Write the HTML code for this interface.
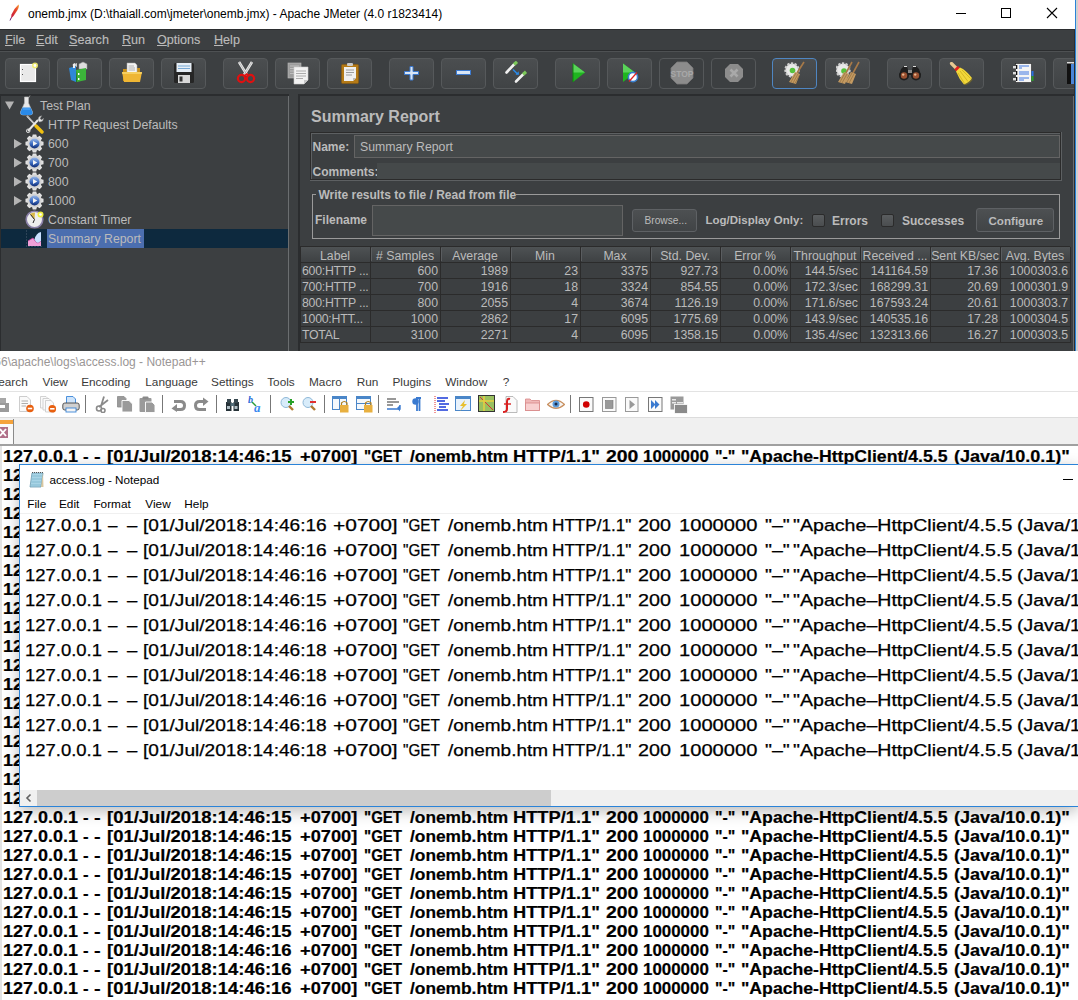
<!DOCTYPE html><html><head><meta charset="utf-8"><style>
*{margin:0;padding:0;box-sizing:border-box}
html,body{width:1078px;height:1000px;overflow:hidden;background:#fff;font-family:"Liberation Sans",sans-serif}
.a{position:absolute}
.t{position:absolute;white-space:pre;line-height:1}
#jm{position:absolute;left:0;top:0;width:1078px;height:351px;background:#3c3f41;overflow:hidden}
.btn{position:absolute;top:58px;width:45px;height:31px;border:1px solid #56595b;border-radius:4px;background:linear-gradient(#4b4e50,#404345)}
.btn svg{position:absolute;left:12px;top:6px}
.mi{position:absolute;top:34px;font-size:12.6px;color:#bbbbbb;line-height:1;white-space:pre;-webkit-text-stroke:0.15px #bbb}
.mi u{text-decoration:underline;text-underline-offset:1px}
.tr{position:absolute;font-size:12.5px;color:#bbbbbb;line-height:1;white-space:pre}
.lb{position:absolute;font-weight:bold;font-size:12px;color:#bbbbbb;line-height:1;white-space:pre}
.fld{position:absolute;background:#45494a;border:1px solid #646464}
.cell{position:absolute;font-size:12.3px;color:#bbbbbb;line-height:1;white-space:pre}
.nl{position:absolute;left:4px;font-weight:bold;font-size:15px;letter-spacing:1.44px;color:#000;line-height:1;white-space:pre}
.np{position:absolute;left:25px;font-size:16px;color:#000;line-height:1;white-space:pre}
.nm{position:absolute;font-size:12px;color:#000;line-height:1;white-space:pre}
.bw{position:absolute;font-style:normal;white-space:pre;line-height:1;font-size:16px;font-weight:bold;color:#000;transform-origin:0 0;-webkit-text-stroke:0.2px #000}
.nw{position:absolute;font-style:normal;white-space:pre;line-height:1;font-size:15.6px;color:#000;transform-origin:0 0;-webkit-text-stroke:0.25px #000}
</style></head><body>
<div id="jm">
<div class="a" style="left:0px;top:0px;width:1078px;height:29px;background:#fff;"></div>
<svg class="a" style="left:9px;top:4px" width="11" height="17" viewBox="0 0 11 17"><defs><linearGradient id="fg" x1="1" y1="0" x2="0" y2="1"><stop offset="0" stop-color="#f7a030"/><stop offset="0.35" stop-color="#e84a2a"/><stop offset="1" stop-color="#c01040"/></linearGradient></defs><path d="M9.5 0.5 Q10.5 2.5 8.5 6 L4.5 12 L2 14.5 L2.5 10.5 Q5 4.5 9.5 0.5 Z" fill="url(#fg)"/><path d="M2.3 13.5 L1 16.5" stroke="#6a2a7a" stroke-width="1"/></svg>
<div class="t" style="left:28px;top:7.64px;font-size:12px;color:#000;font-weight:normal;">onemb.jmx (D:\thaiall.com\jmeter\onemb.jmx) - Apache JMeter (4.0 r1823414)</div>
<div class="a" style="left:956px;top:13px;width:10px;height:1px;background:#000;"></div>
<div class="a" style="left:1001px;top:8px;width:10px;height:10px;border:1px solid #000"></div>
<svg class="a" style="left:1046px;top:7px" width="12" height="12" viewBox="0 0 12 12"><path d="M1 1 L11 11 M11 1 L1 11" stroke="#000" stroke-width="1.1"/></svg>
<div class="a" style="left:0px;top:29px;width:1078px;height:1px;background:#2b2d2f;"></div>
<div class="a" style="left:0px;top:50px;width:1078px;height:1px;background:#2b2d2f;"></div>
<div class="a" style="left:0px;top:51px;width:1078px;height:1px;background:#4e5153;"></div>
<div class="mi" style="left:5px"><u>F</u>ile</div>
<div class="mi" style="left:36px"><u>E</u>dit</div>
<div class="mi" style="left:69px"><u>S</u>earch</div>
<div class="mi" style="left:122px"><u>R</u>un</div>
<div class="mi" style="left:157px"><u>O</u>ptions</div>
<div class="mi" style="left:214px"><u>H</u>elp</div>
<div class="btn" style="left:5px"></div>
<div class="btn" style="left:57px"></div>
<div class="btn" style="left:109px"></div>
<div class="btn" style="left:161px"></div>
<div class="btn" style="left:223px"></div>
<div class="btn" style="left:275px"></div>
<div class="btn" style="left:327px"></div>
<div class="btn" style="left:389px"></div>
<div class="btn" style="left:441px"></div>
<div class="btn" style="left:493px"></div>
<div class="btn" style="left:555px"></div>
<div class="btn" style="left:607px"></div>
<div class="btn" style="left:825px"></div>
<div class="btn" style="left:887px"></div>
<div class="btn" style="left:939px"></div>
<div class="btn" style="left:1001px"></div>
<div class="btn" style="left:1053px"></div>
<div class="btn" style="left:659px;background:#3c3f41;border-color:#55585a"></div>
<div class="btn" style="left:711px;background:#3c3f41;border-color:#55585a"></div>
<div class="btn" style="left:772px;border-color:#4f86c2"></div>
<svg class="a" style="left:19px;top:62px" width="20" height="22" viewBox="0 0 20 22"><rect x="1.5" y="2.5" width="15" height="17" fill="#e9e9e9" stroke="#fff" stroke-width="1.2"/><circle cx="16" cy="3.5" r="3" fill="#f3ee6a" opacity="0.9"/><circle cx="16" cy="3.5" r="1.4" fill="#fff"/><rect x="3" y="7" width="1" height="1" fill="#555"/><rect x="3" y="12" width="1" height="1" fill="#555"/></svg>
<svg class="a" style="left:68px;top:61px" width="22" height="23" viewBox="0 0 22 23"><path d="M4 4 L9 2 L9 6 Z" fill="#ccc"/><path d="M11 3 L15 1 L19 3 V8 L11 8 Z" fill="#ddd" stroke="#999" stroke-width="0.5"/><path d="M1 7 L8 5 V21 L3 19 Z" fill="#2f88d8"/><path d="M8 9 L18 7 V19 L9 21 Z" fill="#3cb53a"/><path d="M8 9 L9 21 L8 21 Z" fill="#1f7d20"/><rect x="10" y="12" width="1.4" height="2" fill="#fff"/><rect x="10" y="17" width="1.4" height="2" fill="#fff"/><path d="M5 3 L7 2 L7 7 L5 7 Z" fill="#eee"/></svg>
<svg class="a" style="left:121px;top:62px" width="22" height="22" viewBox="0 0 22 22"><path d="M2 7 H8 L9 6 H19 V19 H2 Z" fill="#c98f16"/><path d="M6 1 H14 L16 3 V12 H6 Z" fill="#f4f4f4" stroke="#aaa" stroke-width="0.5"/><path d="M7.5 4 H13 M7.5 6 H14 M7.5 8 H14" stroke="#888" stroke-width="0.6"/><path d="M1 10 H21 L19 20 H3 Z" fill="#efb634"/><path d="M1 10 H21 L20.6 12 H1.4 Z" fill="#f7cf5f"/></svg>
<svg class="a" style="left:173px;top:62px" width="22" height="22" viewBox="0 0 22 22"><rect x="1" y="1" width="20" height="20" rx="1.5" fill="#262626"/><rect x="3.5" y="1" width="15" height="9" fill="#e6eef6"/><path d="M5 4 H17 M5 6.5 H17" stroke="#6a9fd0" stroke-width="0.9"/><rect x="5" y="13" width="12" height="8" fill="#d9d9d9"/><rect x="6.5" y="14.5" width="3" height="5" fill="#333"/></svg>
<svg class="a" style="left:236px;top:61px" width="20" height="23" viewBox="0 0 20 23"><path d="M3 1 L11 14 M16 1 L8 14" stroke="#e8e8e8" stroke-width="2.6"/><path d="M3 1 L11 14 M16 1 L8 14" stroke="#9a9a9a" stroke-width="0.6"/><circle cx="5.5" cy="17.5" r="3.6" fill="none" stroke="#e01010" stroke-width="2.2"/><circle cx="14.5" cy="17.5" r="3.6" fill="none" stroke="#e01010" stroke-width="2.2"/><path d="M8 15 L11 13 L12 15" stroke="#e01010" stroke-width="1.6" fill="none"/></svg>
<svg class="a" style="left:287px;top:62px" width="23" height="23" viewBox="0 0 23 23"><rect x="1" y="1" width="13" height="15" fill="#9d9d9d" stroke="#bbb" stroke-width="0.6"/><path d="M3 4 H12 M3 6.5 H12 M3 9 H12 M3 11.5 H12" stroke="#c8c8c8" stroke-width="0.8"/><path d="M7 5 H21 V18 L17 22 H7 Z" fill="#f2f2f2" stroke="#ccc" stroke-width="0.6"/><path d="M9 9 H19 M9 11.5 H19 M9 14 H19 M9 16.5 H16" stroke="#999" stroke-width="0.8"/><path d="M17 22 V18 H21 Z" fill="#c8c8c8"/></svg>
<svg class="a" style="left:340px;top:62px" width="20" height="22" viewBox="0 0 20 22"><rect x="1.5" y="2.5" width="17" height="19" rx="1" fill="#b47a17" stroke="#8a5a10" stroke-width="0.6"/><rect x="7" y="1" width="6" height="3" rx="1" fill="#c8c8c8"/><path d="M4 5 H16 V16 L13 19 H4 Z" fill="#f0f0f0"/><path d="M6 8 H14 M6 10.5 H14 M6 13 H12" stroke="#888" stroke-width="0.8"/><path d="M13 19 V16 H16 Z" fill="#bbb"/></svg>
<svg class="a" style="left:404px;top:66px" width="16" height="15" viewBox="0 0 16 15"><path d="M6 0.5 H9 V5.5 H14.5 V8.5 H9 V14 H6 V8.5 H0.5 V5.5 H6 Z" fill="#d8e6f6" stroke="#3c7ad0" stroke-width="1"/></svg>
<svg class="a" style="left:456px;top:70px" width="16" height="6" viewBox="0 0 16 6"><rect x="0.5" y="0.5" width="14" height="4" fill="#d8e6f6" stroke="#3c7ad0" stroke-width="1"/></svg>
<svg class="a" style="left:505px;top:61px" width="23" height="24" viewBox="0 0 23 24"><path d="M1.5 11.5 L9 3.5" stroke="#f0f0f0" stroke-width="2.6" stroke-linecap="round"/><path d="M9 3.5 L12 0.8" stroke="#7cc75a" stroke-width="3.2"/><path d="M8 8.5 L12.5 13" stroke="#2a8ae8" stroke-width="1.5"/><path d="M10.5 13.8 L14 13.8 L13.6 10.3 Z" fill="#2a8ae8"/><path d="M11 20.5 L18 13.5" stroke="#f0f0f0" stroke-width="2.6" stroke-linecap="round"/><path d="M18 13.5 L21 10.8" stroke="#7cc75a" stroke-width="3.2"/></svg>
<svg class="a" style="left:572px;top:63px" width="14" height="20" viewBox="0 0 14 20"><path d="M1 0.5 L13 9.5 L1 19 Z" fill="#1fb51f"/><path d="M1 0.5 L13 9.5 L1 9.5 Z" fill="#5ad35a"/><path d="M1 0.5 V19" stroke="#0a8a0a" stroke-width="1"/></svg>
<svg class="a" style="left:622px;top:63px" width="17" height="20" viewBox="0 0 17 20"><path d="M1 0.5 L13 9.5 L1 19 Z" fill="#1fb51f"/><path d="M1 0.5 L13 9.5 L1 9.5 Z" fill="#5ad35a"/><circle cx="11" cy="14" r="4.6" fill="#fff" stroke="#3a7fd0" stroke-width="1.6"/><path d="M7 18.5 L15 9.5" stroke="#e02020" stroke-width="1.2"/></svg>
<svg class="a" style="left:670px;top:61px" width="24" height="24" viewBox="0 0 24 24"><path d="M7 1 H17 L23 7 V17 L17 23 H7 L1 17 V7 Z" fill="#8c8c8c" stroke="#7a7a7a" stroke-width="0.8"/><text x="12" y="15.5" font-family="Liberation Sans" font-weight="bold" font-size="8.5" fill="#a8a8a8" text-anchor="middle">STOP</text></svg>
<svg class="a" style="left:724px;top:63px" width="20" height="20" viewBox="0 0 20 20"><path d="M6 1 H14 L19 6 V14 L14 19 H6 L1 14 V6 Z" fill="#8c8c8c"/><path d="M6.5 6.5 L13.5 13.5 M13.5 6.5 L6.5 13.5" stroke="#a9a9a9" stroke-width="2.6"/></svg>
<svg class="a" style="left:783px;top:61px" width="24" height="24" viewBox="0 0 24 24"><circle cx="9" cy="9" r="6.5" fill="#e6e6e6" stroke="#cfcfcf" stroke-width="2.4" stroke-dasharray="2.2 1.4"/><circle cx="9" cy="9" r="5.5" fill="#e9e9e9"/><circle cx="9.5" cy="9.5" r="2.8" fill="#56c23c"/><path d="M21 1 L14 12" stroke="#a87a48" stroke-width="1.6"/><path d="M12 11 L17 13 L13 23 L6 21 Z" fill="#c49a62"/><path d="M8 21 L13 12 M10 22 L15 13 M12 22.5 L16.5 14" stroke="#8a6838" stroke-width="0.6"/></svg>
<svg class="a" style="left:836px;top:61px" width="25" height="24" viewBox="0 0 25 24"><circle cx="7" cy="9" r="6.5" fill="#e6e6e6" stroke="#cfcfcf" stroke-width="2.4" stroke-dasharray="2.2 1.4"/><circle cx="7" cy="9" r="5.5" fill="#e9e9e9"/><circle cx="8" cy="10" r="2.8" fill="#56c23c"/><path d="M16 1 L10 12" stroke="#a87a48" stroke-width="1.6"/><path d="M8 11 L13 13 L9 23 L2 21 Z" fill="#c49a62"/><path d="M23 1 L17 12" stroke="#a87a48" stroke-width="1.6"/><path d="M15 11 L20 13 L16 23 L9 21 Z" fill="#c49a62"/><path d="M4 21 L9 12 M6 22 L11 13 M11 21 L16 12 M13 22 L18 13" stroke="#8a6838" stroke-width="0.6"/></svg>
<svg class="a" style="left:898px;top:65px" width="24" height="16" viewBox="0 0 24 16"><path d="M3 4 L6 1 H9 L10 5 H14 L15 1 H18 L21 4 L23 10 H1 Z" fill="#1e1e1e"/><circle cx="6" cy="10.5" r="5" fill="#1e1e1e"/><circle cx="18" cy="10.5" r="5" fill="#1e1e1e"/><circle cx="6" cy="10.5" r="3.2" fill="#9a5030"/><circle cx="18" cy="10.5" r="3.2" fill="#9a5030"/><circle cx="5.2" cy="9.6" r="1.2" fill="#e8b890"/><circle cx="17.2" cy="9.6" r="1.2" fill="#e8b890"/><rect x="10" y="5" width="4" height="3" fill="#888"/><path d="M6 1.5 H9 M15 1.5 H18" stroke="#ddd" stroke-width="1"/></svg>
<svg class="a" style="left:949px;top:62px" width="24" height="23" viewBox="0 0 24 23"><path d="M2.5 1.5 L8.5 7.5" stroke="#e8c890" stroke-width="3.2" stroke-linecap="round"/><path d="M6.5 8.5 L10 5" stroke="#e02020" stroke-width="3.4"/><path d="M7 9.5 L11 5.5 Q17 8 23 16 Q21 20 15 22.5 Q10 17 7 9.5 Z" fill="#f2d83a"/><path d="M9 11 L15.5 21.5 M11 9 L19 19.5 M13 8 L21.5 16.5" stroke="#c8a818" stroke-width="0.7"/><path d="M15 22.5 Q21 20 23 16 L23.5 18 Q21 22 15.5 23.5 Z" fill="#8a7a20" opacity="0.6"/></svg>
<svg class="a" style="left:1012px;top:63px" width="23" height="21" viewBox="0 0 23 21"><rect x="3.5" y="0.5" width="16" height="19" fill="#f4f4f4" stroke="#222" stroke-width="0.6"/><rect x="1" y="3" width="4" height="2.4" fill="#ddd"/><rect x="1" y="9" width="4" height="2.4" fill="#ddd"/><rect x="1" y="15" width="4" height="2.4" fill="#ddd"/><rect x="4" y="2" width="1.3" height="4" fill="#111"/><rect x="4" y="8" width="1.3" height="4" fill="#111"/><rect x="4" y="14" width="1.3" height="4" fill="#111"/><path d="M7 3 H17 M7 5 H10 M7 9 H17 M7 11 H17 M7 15 H17 M7 17 H12" stroke="#2a6ae0" stroke-width="0.9"/><rect x="19.5" y="8" width="2" height="5" fill="#2a70e0"/><rect x="19.5" y="13" width="2" height="5" fill="#2a9a2a"/></svg>
<svg class="a" style="left:1067px;top:62px" width="9" height="23" viewBox="0 0 9 23"><rect x="0" y="1" width="5" height="21" fill="#111"/><rect x="4" y="2" width="5" height="20" fill="#4a86d8"/><rect x="0" y="0" width="9" height="1.5" fill="#ddd"/></svg>
<div class="a" style="left:0px;top:94px;width:1078px;height:2px;background:#2b2d2f;"></div>
<div class="a" style="left:0px;top:94px;width:1px;height:257px;background:#2b2d2f;"></div>
<div class="a" style="left:288px;top:96px;width:1px;height:255px;background:#6b6e70;"></div>
<div class="a" style="left:289px;top:94px;width:9px;height:257px;background:#3c3f41;"></div>
<div class="a" style="left:298px;top:94px;width:2px;height:257px;background:#2b2d2f;"></div>
<div class="a" style="left:1073px;top:96px;width:1px;height:255px;background:#6b6e70;"></div>
<div class="a" style="left:1074px;top:29px;width:1px;height:322px;background:#2b2d2f;"></div>
<div class="a" style="left:1075px;top:0px;width:1px;height:351px;background:#2a83d8;"></div>
<div class="a" style="left:1076px;top:0px;width:2px;height:351px;background:#d0d0d0;"></div>
<div class="a" style="left:1px;top:229px;width:287px;height:19px;background:#0d293e;"></div>
<div class="a" style="left:47px;top:229px;width:97px;height:19px;background:#4b6eaf;"></div>
<div class="t" style="left:40px;top:99.99px;font-size:12.3px;color:#bbbbbb;font-weight:normal;">Test Plan</div>
<div class="t" style="left:48px;top:118.99px;font-size:12.3px;color:#bbbbbb;font-weight:normal;">HTTP Request Defaults</div>
<div class="t" style="left:48px;top:137.99px;font-size:12.3px;color:#bbbbbb;font-weight:normal;">600</div>
<div class="t" style="left:48px;top:156.99px;font-size:12.3px;color:#bbbbbb;font-weight:normal;">700</div>
<div class="t" style="left:48px;top:175.99px;font-size:12.3px;color:#bbbbbb;font-weight:normal;">800</div>
<div class="t" style="left:48px;top:194.99px;font-size:12.3px;color:#bbbbbb;font-weight:normal;">1000</div>
<div class="t" style="left:48px;top:213.99px;font-size:12.3px;color:#bbbbbb;font-weight:normal;">Constant Timer</div>
<div class="t" style="left:48px;top:232.99px;font-size:12.3px;color:#bbbbbb;font-weight:normal;">Summary Report</div>
<svg class="a" style="left:20px;top:95px" width="13" height="21" viewBox="0 0 13 21"><path d="M10 0.5 L8.5 3" stroke="#aaa" stroke-width="0.8"/><path d="M4.5 2 H8.5 V8 L12.5 17 Q13 20 10 20 H3 Q0 20 0.5 17 L4.5 8 Z" fill="#e8e8e8" stroke="#bbb" stroke-width="0.6"/><path d="M2.6 12.5 H10.4 L12.5 17 Q13 20 10 20 H3 Q0 20 0.5 17 Z" fill="#2a8ae8"/><path d="M3 14 H10" stroke="#6ab6ff" stroke-width="0.8"/></svg>
<svg class="a" style="left:25px;top:115px" width="19" height="19" viewBox="0 0 19 19"><path d="M2 1 L15 15" stroke="#f0f0f0" stroke-width="1.8"/><path d="M2 1 L15 15" stroke="#777" stroke-width="0.5"/><path d="M11 11 L17 17" stroke="#f0c010" stroke-width="3.4" stroke-linecap="round"/><path d="M3 16 L13 5" stroke="#e8e8e8" stroke-width="2" /><circle cx="3.2" cy="15.8" r="1.8" fill="none" stroke="#ddd" stroke-width="1"/><path d="M13 5 L14 2 L16.5 0.8 L15 3.5 L16.5 5 L18.5 3.5 L17.5 6 L14.5 7 Z" fill="#e8e8e8" stroke="#aaa" stroke-width="0.5"/></svg>
<svg class="a" style="left:25px;top:134px" width="19" height="19" viewBox="0 0 19 19"><defs><linearGradient id="gb" x1="0" y1="0" x2="0" y2="1"><stop offset="0" stop-color="#9ab8e8"/><stop offset="0.55" stop-color="#3a6ac0"/><stop offset="1" stop-color="#102a70"/></linearGradient></defs><polygon points="7.16,2.69 7.74,0.47 11.26,0.47 11.84,2.69 12.66,3.03 14.64,1.87 17.13,4.36 15.97,6.34 16.31,7.16 18.53,7.74 18.53,11.26 16.31,11.84 15.97,12.66 17.13,14.64 14.64,17.13 12.66,15.97 11.84,16.31 11.26,18.53 7.74,18.53 7.16,16.31 6.34,15.97 4.36,17.13 1.87,14.64 3.03,12.66 2.69,11.84 0.47,11.26 0.47,7.74 2.69,7.16 3.03,6.34 1.87,4.36 4.36,1.87 6.34,3.03" fill="#e2e2e2"/><circle cx="9.5" cy="9.5" r="7" fill="#d4d4d4"/><circle cx="9.5" cy="9.5" r="5" fill="url(#gb)"/><path d="M8.0 7.0 L12.3 9.5 L8.0 12.0 Z" fill="#f4f4f4"/></svg>
<svg class="a" style="left:25px;top:153px" width="19" height="19" viewBox="0 0 19 19"><defs><linearGradient id="gb" x1="0" y1="0" x2="0" y2="1"><stop offset="0" stop-color="#9ab8e8"/><stop offset="0.55" stop-color="#3a6ac0"/><stop offset="1" stop-color="#102a70"/></linearGradient></defs><polygon points="7.16,2.69 7.74,0.47 11.26,0.47 11.84,2.69 12.66,3.03 14.64,1.87 17.13,4.36 15.97,6.34 16.31,7.16 18.53,7.74 18.53,11.26 16.31,11.84 15.97,12.66 17.13,14.64 14.64,17.13 12.66,15.97 11.84,16.31 11.26,18.53 7.74,18.53 7.16,16.31 6.34,15.97 4.36,17.13 1.87,14.64 3.03,12.66 2.69,11.84 0.47,11.26 0.47,7.74 2.69,7.16 3.03,6.34 1.87,4.36 4.36,1.87 6.34,3.03" fill="#e2e2e2"/><circle cx="9.5" cy="9.5" r="7" fill="#d4d4d4"/><circle cx="9.5" cy="9.5" r="5" fill="url(#gb)"/><path d="M8.0 7.0 L12.3 9.5 L8.0 12.0 Z" fill="#f4f4f4"/></svg>
<svg class="a" style="left:25px;top:172px" width="19" height="19" viewBox="0 0 19 19"><defs><linearGradient id="gb" x1="0" y1="0" x2="0" y2="1"><stop offset="0" stop-color="#9ab8e8"/><stop offset="0.55" stop-color="#3a6ac0"/><stop offset="1" stop-color="#102a70"/></linearGradient></defs><polygon points="7.16,2.69 7.74,0.47 11.26,0.47 11.84,2.69 12.66,3.03 14.64,1.87 17.13,4.36 15.97,6.34 16.31,7.16 18.53,7.74 18.53,11.26 16.31,11.84 15.97,12.66 17.13,14.64 14.64,17.13 12.66,15.97 11.84,16.31 11.26,18.53 7.74,18.53 7.16,16.31 6.34,15.97 4.36,17.13 1.87,14.64 3.03,12.66 2.69,11.84 0.47,11.26 0.47,7.74 2.69,7.16 3.03,6.34 1.87,4.36 4.36,1.87 6.34,3.03" fill="#e2e2e2"/><circle cx="9.5" cy="9.5" r="7" fill="#d4d4d4"/><circle cx="9.5" cy="9.5" r="5" fill="url(#gb)"/><path d="M8.0 7.0 L12.3 9.5 L8.0 12.0 Z" fill="#f4f4f4"/></svg>
<svg class="a" style="left:25px;top:191px" width="19" height="19" viewBox="0 0 19 19"><defs><linearGradient id="gb" x1="0" y1="0" x2="0" y2="1"><stop offset="0" stop-color="#9ab8e8"/><stop offset="0.55" stop-color="#3a6ac0"/><stop offset="1" stop-color="#102a70"/></linearGradient></defs><polygon points="7.16,2.69 7.74,0.47 11.26,0.47 11.84,2.69 12.66,3.03 14.64,1.87 17.13,4.36 15.97,6.34 16.31,7.16 18.53,7.74 18.53,11.26 16.31,11.84 15.97,12.66 17.13,14.64 14.64,17.13 12.66,15.97 11.84,16.31 11.26,18.53 7.74,18.53 7.16,16.31 6.34,15.97 4.36,17.13 1.87,14.64 3.03,12.66 2.69,11.84 0.47,11.26 0.47,7.74 2.69,7.16 3.03,6.34 1.87,4.36 4.36,1.87 6.34,3.03" fill="#e2e2e2"/><circle cx="9.5" cy="9.5" r="7" fill="#d4d4d4"/><circle cx="9.5" cy="9.5" r="5" fill="url(#gb)"/><path d="M8.0 7.0 L12.3 9.5 L8.0 12.0 Z" fill="#f4f4f4"/></svg>
<svg class="a" style="left:25px;top:210px" width="19" height="19" viewBox="0 0 19 19"><circle cx="9.5" cy="9.5" r="8.3" fill="#eeeeee" stroke="#8a80a8" stroke-width="1.6"/><path d="M9.5 9.5 L5 4 A7 7 0 0 1 10 2.5 Z" fill="#d8b848"/><path d="M9.5 9.5 L5.5 4.5 M9.5 9.5 L8 13" stroke="#222" stroke-width="1"/><circle cx="15.5" cy="4.5" r="3" fill="#f0f040"/><circle cx="15.5" cy="4.5" r="1.3" fill="#fff"/></svg>
<svg class="a" style="left:26px;top:230px" width="17" height="17" viewBox="0 0 17 17"><path d="M0.5 0.5 V16.5 H16" stroke="#6a7a88" stroke-width="0.7" fill="none" stroke-dasharray="1 2"/><path d="M2 16 L2 11 L7 8 L10 12 L12 13 L15 11 V16 Z" fill="#f0a0d8"/><path d="M2 11 L7 8 L10 12 L12 13 L15 11" stroke="#d040a0" stroke-width="0.8" fill="none"/><path d="M8.5 9.5 Q10 3 15 2 V11 L12 13 L10 12 Z" fill="#c8e0ff"/></svg>
<svg class="a" style="left:5px;top:101px" width="10" height="9"><path d="M0 0.5 H9 L4.5 8.5 Z" fill="#b4b4b4"/></svg>
<svg class="a" style="left:14px;top:139px" width="9" height="10"><path d="M0 0 V9.5 L8 4.75 Z" fill="#b4b4b4"/></svg>
<svg class="a" style="left:14px;top:158px" width="9" height="10"><path d="M0 0 V9.5 L8 4.75 Z" fill="#b4b4b4"/></svg>
<svg class="a" style="left:14px;top:177px" width="9" height="10"><path d="M0 0 V9.5 L8 4.75 Z" fill="#b4b4b4"/></svg>
<svg class="a" style="left:14px;top:196px" width="9" height="10"><path d="M0 0 V9.5 L8 4.75 Z" fill="#b4b4b4"/></svg>
<div class="t" style="left:311px;top:108.96px;font-size:16px;color:#bbbbbb;font-weight:bold;">Summary Report</div>
<div class="a" style="left:310px;top:132px;width:752px;height:1px;background:#2b2b2b;"></div>
<div class="a" style="left:310px;top:132px;width:1px;height:48px;background:#2b2b2b;"></div>
<div class="a" style="left:311px;top:133px;width:750px;height:1px;background:#5d6062;"></div>
<div class="a" style="left:311px;top:133px;width:1px;height:46px;background:#5d6062;"></div>
<div class="a" style="left:310px;top:179px;width:752px;height:1px;background:#2b2b2b;"></div>
<div class="a" style="left:310px;top:180px;width:752px;height:1px;background:#5d6062;"></div>
<div class="a" style="left:1060px;top:132px;width:1px;height:48px;background:#2b2b2b;"></div>
<div class="a" style="left:1061px;top:132px;width:1px;height:49px;background:#5d6062;"></div>
<div class="t" style="left:312.5px;top:140.84px;font-size:12px;color:#bbbbbb;font-weight:bold;">Name:</div>
<div class="fld" style="left:354px;top:135px;width:706px;height:23px"></div>
<div class="t" style="left:360px;top:140.59px;font-size:12.3px;color:#bbbbbb;font-weight:normal;">Summary Report</div>
<div class="t" style="left:312.5px;top:165.64px;font-size:12px;color:#bbbbbb;font-weight:bold;">Comments:</div>
<div class="a" style="left:377px;top:163px;width:683px;height:16px;background:#45494a;"></div>
<div class="a" style="left:312px;top:194px;width:748px;height:45px;border:1px solid #9a9a9a"></div>
<div class="a" style="left:316px;top:190px;width:200px;height:8px;background:#3c3f41;"></div>
<div class="t" style="left:318.4px;top:188.54px;font-size:12px;color:#bbbbbb;font-weight:bold;">Write results to file / Read from file</div>
<div class="t" style="left:315px;top:214.34px;font-size:12px;color:#bbbbbb;font-weight:bold;">Filename</div>
<div class="fld" style="left:372px;top:205px;width:251px;height:31px"></div>
<div class="a" style="left:632px;top:209px;width:65px;height:23px;border:1px solid #5e6164;border-radius:3px;background:linear-gradient(#4d5052,#414446)"></div>
<div class="t" style="left:644.5px;top:215.57px;font-size:10.2px;color:#bbbbbb;font-weight:normal;">Browse...</div>
<div class="t" style="left:705.5px;top:215.27px;font-size:11.5px;color:#bbbbbb;font-weight:bold;">Log/Display Only:</div>
<div class="a" style="left:812px;top:214px;width:13px;height:13px;border:1px solid #2b2b2b;border-radius:2px;background:linear-gradient(#5a5d5f,#4a4d4f)"></div>
<div class="t" style="left:832px;top:214.84px;font-size:12px;color:#bbbbbb;font-weight:bold;">Errors</div>
<div class="a" style="left:881px;top:214px;width:13px;height:13px;border:1px solid #2b2b2b;border-radius:2px;background:linear-gradient(#5a5d5f,#4a4d4f)"></div>
<div class="t" style="left:902px;top:214.84px;font-size:12px;color:#bbbbbb;font-weight:bold;">Successes</div>
<div class="a" style="left:976px;top:208px;width:78px;height:24px;border:1px solid #5e6164;border-radius:3px;background:linear-gradient(#4d5052,#414446)"></div>
<div class="t" style="left:988.5px;top:215.18px;font-size:11.6px;color:#bbbbbb;font-weight:bold;">Configure</div>
<div class="a" style="left:300px;top:246px;width:770px;height:105px;background:#3c3f41;"></div>
<div class="a" style="left:300px;top:246px;width:770px;height:1px;background:#2b2b2b;"></div>
<div class="a" style="left:300px;top:247px;width:770px;height:15px;background:linear-gradient(#4e5254,#3e4143);"></div>
<div class="cell" style="left:300px;top:249.9px;width:70px;text-align:center">Label</div>
<div class="cell" style="left:370px;top:249.9px;width:70px;text-align:center"># Samples</div>
<div class="cell" style="left:440px;top:249.9px;width:70px;text-align:center">Average</div>
<div class="cell" style="left:510px;top:249.9px;width:70px;text-align:center">Min</div>
<div class="cell" style="left:580px;top:249.9px;width:70px;text-align:center">Max</div>
<div class="cell" style="left:650px;top:249.9px;width:70px;text-align:center">Std. Dev.</div>
<div class="cell" style="left:720px;top:249.9px;width:70px;text-align:center">Error %</div>
<div class="cell" style="left:790px;top:249.9px;width:70px;text-align:center">Throughput</div>
<div class="cell" style="left:860px;top:249.9px;width:70px;text-align:center">Received ...</div>
<div class="cell" style="left:930px;top:249.9px;width:70px;text-align:center">Sent KB/sec</div>
<div class="cell" style="left:1000px;top:249.9px;width:70px;text-align:center">Avg. Bytes</div>
<div class="cell" style="left:302px;top:264.5px;width:68px;letter-spacing:-0.25px">600:HTTP ...</div>
<div class="cell" style="left:370px;top:264.5px;width:68px;text-align:right">600</div>
<div class="cell" style="left:440px;top:264.5px;width:68px;text-align:right">1989</div>
<div class="cell" style="left:510px;top:264.5px;width:68px;text-align:right">23</div>
<div class="cell" style="left:580px;top:264.5px;width:68px;text-align:right">3375</div>
<div class="cell" style="left:650px;top:264.5px;width:68px;text-align:right">927.73</div>
<div class="cell" style="left:720px;top:264.5px;width:68px;text-align:right">0.00%</div>
<div class="cell" style="left:790px;top:264.5px;width:68px;text-align:right">144.5/sec</div>
<div class="cell" style="left:860px;top:264.5px;width:68px;text-align:right">141164.59</div>
<div class="cell" style="left:930px;top:264.5px;width:68px;text-align:right">17.36</div>
<div class="cell" style="left:1000px;top:264.5px;width:68px;text-align:right">1000303.6</div>
<div class="cell" style="left:302px;top:280.5px;width:68px;letter-spacing:-0.25px">700:HTTP ...</div>
<div class="cell" style="left:370px;top:280.5px;width:68px;text-align:right">700</div>
<div class="cell" style="left:440px;top:280.5px;width:68px;text-align:right">1916</div>
<div class="cell" style="left:510px;top:280.5px;width:68px;text-align:right">18</div>
<div class="cell" style="left:580px;top:280.5px;width:68px;text-align:right">3324</div>
<div class="cell" style="left:650px;top:280.5px;width:68px;text-align:right">854.55</div>
<div class="cell" style="left:720px;top:280.5px;width:68px;text-align:right">0.00%</div>
<div class="cell" style="left:790px;top:280.5px;width:68px;text-align:right">172.3/sec</div>
<div class="cell" style="left:860px;top:280.5px;width:68px;text-align:right">168299.31</div>
<div class="cell" style="left:930px;top:280.5px;width:68px;text-align:right">20.69</div>
<div class="cell" style="left:1000px;top:280.5px;width:68px;text-align:right">1000301.9</div>
<div class="cell" style="left:302px;top:296.5px;width:68px;letter-spacing:-0.25px">800:HTTP ...</div>
<div class="cell" style="left:370px;top:296.5px;width:68px;text-align:right">800</div>
<div class="cell" style="left:440px;top:296.5px;width:68px;text-align:right">2055</div>
<div class="cell" style="left:510px;top:296.5px;width:68px;text-align:right">4</div>
<div class="cell" style="left:580px;top:296.5px;width:68px;text-align:right">3674</div>
<div class="cell" style="left:650px;top:296.5px;width:68px;text-align:right">1126.19</div>
<div class="cell" style="left:720px;top:296.5px;width:68px;text-align:right">0.00%</div>
<div class="cell" style="left:790px;top:296.5px;width:68px;text-align:right">171.6/sec</div>
<div class="cell" style="left:860px;top:296.5px;width:68px;text-align:right">167593.24</div>
<div class="cell" style="left:930px;top:296.5px;width:68px;text-align:right">20.61</div>
<div class="cell" style="left:1000px;top:296.5px;width:68px;text-align:right">1000303.7</div>
<div class="cell" style="left:302px;top:312.5px;width:68px;letter-spacing:-0.25px">1000:HTT...</div>
<div class="cell" style="left:370px;top:312.5px;width:68px;text-align:right">1000</div>
<div class="cell" style="left:440px;top:312.5px;width:68px;text-align:right">2862</div>
<div class="cell" style="left:510px;top:312.5px;width:68px;text-align:right">17</div>
<div class="cell" style="left:580px;top:312.5px;width:68px;text-align:right">6095</div>
<div class="cell" style="left:650px;top:312.5px;width:68px;text-align:right">1775.69</div>
<div class="cell" style="left:720px;top:312.5px;width:68px;text-align:right">0.00%</div>
<div class="cell" style="left:790px;top:312.5px;width:68px;text-align:right">143.9/sec</div>
<div class="cell" style="left:860px;top:312.5px;width:68px;text-align:right">140535.16</div>
<div class="cell" style="left:930px;top:312.5px;width:68px;text-align:right">17.28</div>
<div class="cell" style="left:1000px;top:312.5px;width:68px;text-align:right">1000304.5</div>
<div class="cell" style="left:302px;top:328.5px;width:68px;letter-spacing:-0.25px">TOTAL</div>
<div class="cell" style="left:370px;top:328.5px;width:68px;text-align:right">3100</div>
<div class="cell" style="left:440px;top:328.5px;width:68px;text-align:right">2271</div>
<div class="cell" style="left:510px;top:328.5px;width:68px;text-align:right">4</div>
<div class="cell" style="left:580px;top:328.5px;width:68px;text-align:right">6095</div>
<div class="cell" style="left:650px;top:328.5px;width:68px;text-align:right">1358.15</div>
<div class="cell" style="left:720px;top:328.5px;width:68px;text-align:right">0.00%</div>
<div class="cell" style="left:790px;top:328.5px;width:68px;text-align:right">135.4/sec</div>
<div class="cell" style="left:860px;top:328.5px;width:68px;text-align:right">132313.66</div>
<div class="cell" style="left:930px;top:328.5px;width:68px;text-align:right">16.27</div>
<div class="cell" style="left:1000px;top:328.5px;width:68px;text-align:right">1000303.5</div>
<div class="a" style="left:300px;top:247px;width:1px;height:96px;background:#2b2b2b;"></div>
<div class="a" style="left:370px;top:247px;width:1px;height:96px;background:#2b2b2b;"></div>
<div class="a" style="left:440px;top:247px;width:1px;height:96px;background:#2b2b2b;"></div>
<div class="a" style="left:510px;top:247px;width:1px;height:96px;background:#2b2b2b;"></div>
<div class="a" style="left:580px;top:247px;width:1px;height:96px;background:#2b2b2b;"></div>
<div class="a" style="left:650px;top:247px;width:1px;height:96px;background:#2b2b2b;"></div>
<div class="a" style="left:720px;top:247px;width:1px;height:96px;background:#2b2b2b;"></div>
<div class="a" style="left:790px;top:247px;width:1px;height:96px;background:#2b2b2b;"></div>
<div class="a" style="left:860px;top:247px;width:1px;height:96px;background:#2b2b2b;"></div>
<div class="a" style="left:930px;top:247px;width:1px;height:96px;background:#2b2b2b;"></div>
<div class="a" style="left:1000px;top:247px;width:1px;height:96px;background:#2b2b2b;"></div>
<div class="a" style="left:1070px;top:247px;width:1px;height:96px;background:#2b2b2b;"></div>
<div class="a" style="left:300px;top:262px;width:770px;height:1px;background:#2b2b2b;"></div>
<div class="a" style="left:300px;top:278px;width:770px;height:1px;background:#2b2b2b;"></div>
<div class="a" style="left:300px;top:294px;width:770px;height:1px;background:#2b2b2b;"></div>
<div class="a" style="left:300px;top:310px;width:770px;height:1px;background:#2b2b2b;"></div>
<div class="a" style="left:300px;top:326px;width:770px;height:1px;background:#2b2b2b;"></div>
<div class="a" style="left:300px;top:342px;width:770px;height:1px;background:#2b2b2b;"></div>
<div class="a" style="left:371px;top:248px;width:1px;height:13px;background:#5a5d60;"></div>
<div class="a" style="left:441px;top:248px;width:1px;height:13px;background:#5a5d60;"></div>
<div class="a" style="left:511px;top:248px;width:1px;height:13px;background:#5a5d60;"></div>
<div class="a" style="left:581px;top:248px;width:1px;height:13px;background:#5a5d60;"></div>
<div class="a" style="left:651px;top:248px;width:1px;height:13px;background:#5a5d60;"></div>
<div class="a" style="left:721px;top:248px;width:1px;height:13px;background:#5a5d60;"></div>
<div class="a" style="left:791px;top:248px;width:1px;height:13px;background:#5a5d60;"></div>
<div class="a" style="left:861px;top:248px;width:1px;height:13px;background:#5a5d60;"></div>
<div class="a" style="left:931px;top:248px;width:1px;height:13px;background:#5a5d60;"></div>
<div class="a" style="left:1001px;top:248px;width:1px;height:13px;background:#5a5d60;"></div>
</div>
<div class="a" style="left:0;top:351px;width:1078px;height:649px;background:#fff;overflow:hidden"></div>
<div class="t" style="left:-5.7px;top:355.64px;font-size:12px;color:#9a9696;font-weight:normal;">66\apache\logs\access.log - Notepad++</div>
<div class="t" style="left:-9.7px;top:377.01px;font-size:11.8px;color:#3a3a3a;font-weight:normal;">Search</div>
<div class="t" style="left:42.5px;top:377.01px;font-size:11.8px;color:#3a3a3a;font-weight:normal;">View</div>
<div class="t" style="left:81.2px;top:377.01px;font-size:11.8px;color:#3a3a3a;font-weight:normal;">Encoding</div>
<div class="t" style="left:145.3px;top:377.01px;font-size:11.8px;color:#3a3a3a;font-weight:normal;">Language</div>
<div class="t" style="left:211.1px;top:377.01px;font-size:11.8px;color:#3a3a3a;font-weight:normal;">Settings</div>
<div class="t" style="left:267.2px;top:377.01px;font-size:11.8px;color:#3a3a3a;font-weight:normal;">Tools</div>
<div class="t" style="left:309px;top:377.01px;font-size:11.8px;color:#3a3a3a;font-weight:normal;">Macro</div>
<div class="t" style="left:356.7px;top:377.01px;font-size:11.8px;color:#3a3a3a;font-weight:normal;">Run</div>
<div class="t" style="left:392.4px;top:377.01px;font-size:11.8px;color:#3a3a3a;font-weight:normal;">Plugins</div>
<div class="t" style="left:445.2px;top:377.01px;font-size:11.8px;color:#3a3a3a;font-weight:normal;">Window</div>
<div class="t" style="left:502.7px;top:377.01px;font-size:11.8px;color:#3a3a3a;font-weight:normal;">?</div>
<div class="a" style="left:0px;top:391px;width:1078px;height:1px;background:#e3e3e3;"></div>
<div class="a" style="left:0px;top:417px;width:1078px;height:1px;background:#dcdcdc;"></div>
<svg class="a" style="left:0px;top:396px" width="10" height="16" viewBox="0 0 10 16"><rect x="-4" y="2" width="10" height="5" fill="#a8a8a8"/><rect x="-4" y="7" width="13" height="9" fill="#9a9a9a"/><rect x="0" y="9" width="5" height="3" fill="#fff"/></svg>
<svg class="a" style="left:18px;top:396px" width="16" height="17" viewBox="0 0 16 17"><path d="M1.5 0.5 H9 L12.5 4 V15.5 H1.5 Z" fill="#fafafa" stroke="#c0c0c0" stroke-width="0.8"/><path d="M3.5 5 H10 M3.5 7.5 H10 M3.5 10 H8" stroke="#999" stroke-width="0.8"/><circle cx="12" cy="12.5" r="3.8" fill="#e86010"/><rect x="9.8" y="11.7" width="4.4" height="1.6" fill="#fff"/></svg>
<svg class="a" style="left:40px;top:396px" width="16" height="17" viewBox="0 0 16 17"><path d="M0.5 0.5 H6 L8 2.5 V12 H0.5 Z" fill="#fafafa" stroke="#c8c8c8" stroke-width="0.8"/><path d="M3 2.5 H9 L11 4.5 V14 H3 Z" fill="#fafafa" stroke="#c8c8c8" stroke-width="0.8"/><path d="M5.5 4.5 H11 L13.5 7 V16 H5.5 Z" fill="#fafafa" stroke="#c8c8c8" stroke-width="0.8"/><circle cx="12.3" cy="12.8" r="3.8" fill="#e86010"/><rect x="10.1" y="12" width="4.4" height="1.6" fill="#fff"/></svg>
<svg class="a" style="left:62px;top:396px" width="18" height="17" viewBox="0 0 18 17"><path d="M4.5 0.5 H11 L13.5 3 V8 H4.5 Z" fill="#cfe4fa" stroke="#3a86d8" stroke-width="0.9"/><rect x="0.8" y="7" width="16.4" height="7" rx="2" fill="#d0d0d0" stroke="#444" stroke-width="0.9"/><rect x="4" y="12" width="10" height="4" fill="#f4f4f4" stroke="#3a86d8" stroke-width="0.9"/></svg>
<svg class="a" style="left:85px;top:395px" width="1" height="18" viewBox="0 0 1 18"><rect width="1" height="18" fill="#777"/></svg>
<svg class="a" style="left:95px;top:396px" width="15" height="17" viewBox="0 0 15 17"><path d="M9 0.5 L6 10 M13 4 L4 11" stroke="#8a8a8a" stroke-width="1.8"/><circle cx="4" cy="12.5" r="2.5" fill="none" stroke="#8a8a8a" stroke-width="1.6"/><circle cx="8" cy="14.5" r="2" fill="none" stroke="#8a8a8a" stroke-width="1.6"/></svg>
<svg class="a" style="left:117px;top:396px" width="16" height="17" viewBox="0 0 16 17"><path d="M0.5 0.5 H7 L9 2.5 V11 H0.5 Z" fill="#9a9a9a" stroke="#8a8a8a" stroke-width="0.8"/><path d="M5 4.5 H12 L15.5 8 V16 H5 Z" fill="#9a9a9a" stroke="#fff" stroke-width="0.9"/></svg>
<svg class="a" style="left:139px;top:396px" width="17" height="17" viewBox="0 0 17 17"><rect x="0.5" y="2" width="12" height="14" rx="1" fill="#9a9a9a"/><rect x="3.5" y="0.5" width="6" height="3" rx="1" fill="#8a8a8a"/><path d="M6.5 6 H13 L16 9 V16.5 H6.5 Z" fill="#9a9a9a" stroke="#fff" stroke-width="0.9"/></svg>
<svg class="a" style="left:162px;top:395px" width="1" height="18" viewBox="0 0 1 18"><rect width="1" height="18" fill="#777"/></svg>
<svg class="a" style="left:171px;top:396px" width="15" height="17" viewBox="0 0 15 17"><path d="M3 5.5 H9.5 Q13.5 5.5 13.5 9.5 Q13.5 13.5 9.5 13.5 H5" stroke="#8a8a8a" stroke-width="3" fill="none"/><path d="M0.5 12.5 L6 8 V16 Z" fill="#8a8a8a"/></svg>
<svg class="a" style="left:194px;top:396px" width="15" height="17" viewBox="0 0 15 17"><path d="M12 13.5 H5.5 Q1.5 13.5 1.5 9.5 Q1.5 5.5 5.5 5.5 H10" stroke="#8a8a8a" stroke-width="3" fill="none"/><path d="M14.5 5.5 L9 1.5 V10 Z" fill="#8a8a8a"/></svg>
<svg class="a" style="left:216px;top:395px" width="1" height="18" viewBox="0 0 1 18"><rect width="1" height="18" fill="#777"/></svg>
<svg class="a" style="left:225px;top:396px" width="15" height="17" viewBox="0 0 15 17"><rect x="1" y="6" width="5.5" height="9" fill="#263238"/><rect x="8.5" y="6" width="5.5" height="9" fill="#263238"/><rect x="2" y="3" width="4" height="4" fill="#37474f"/><rect x="9" y="3" width="4" height="4" fill="#37474f"/><rect x="5.5" y="7" width="4" height="3" fill="#546e7a"/><rect x="2" y="10" width="3" height="3" fill="#b0bec5"/><rect x="9.5" y="10" width="3" height="3" fill="#b0bec5"/></svg>
<svg class="a" style="left:248px;top:395px" width="17" height="18" viewBox="0 0 17 18"><text x="0" y="8" font-family="Liberation Serif" font-style="italic" font-weight="bold" font-size="10" fill="#2a6ad8">b</text><text x="6" y="17" font-family="Liberation Serif" font-style="italic" font-weight="bold" font-size="13" fill="#3a8af0">a</text><path d="M4 7 L8 11" stroke="#2a9a3a" stroke-width="1.4"/></svg>
<svg class="a" style="left:270px;top:395px" width="1" height="18" viewBox="0 0 1 18"><rect width="1" height="18" fill="#777"/></svg>
<svg class="a" style="left:280px;top:396px" width="15" height="17" viewBox="0 0 15 17"><circle cx="6" cy="6.5" r="5" fill="#d8ecfa" stroke="#8fb8d8" stroke-width="1"/><path d="M9 10 L13 14" stroke="#b07830" stroke-width="2.4"/><path d="M8 6 H14 M11 3 V9" stroke="#28a028" stroke-width="2"/></svg>
<svg class="a" style="left:302px;top:396px" width="15" height="17" viewBox="0 0 15 17"><circle cx="6" cy="6.5" r="5" fill="#d8ecfa" stroke="#8fb8d8" stroke-width="1"/><path d="M9 10 L13 14" stroke="#b07830" stroke-width="2.4"/><path d="M8 6 H14" stroke="#e03030" stroke-width="2"/></svg>
<svg class="a" style="left:324px;top:395px" width="1" height="18" viewBox="0 0 1 18"><rect width="1" height="18" fill="#777"/></svg>
<svg class="a" style="left:332px;top:396px" width="17" height="17" viewBox="0 0 17 17"><rect x="0.5" y="0.5" width="14" height="13" fill="#f4f8fc" stroke="#4a86c8" stroke-width="1"/><rect x="0.5" y="0.5" width="14" height="2.5" fill="#4a86c8"/><path d="M7.5 3 V13.5" stroke="#4a86c8" stroke-width="1"/><rect x="8" y="9" width="8.5" height="7.5" fill="#e8b040"/><path d="M9.5 9 V7 Q12.25 4 15 7 V9" stroke="#b08020" stroke-width="1.2" fill="none"/></svg>
<svg class="a" style="left:356px;top:396px" width="17" height="17" viewBox="0 0 17 17"><rect x="0.5" y="0.5" width="14" height="13" fill="#f4f8fc" stroke="#4a86c8" stroke-width="1"/><rect x="0.5" y="0.5" width="14" height="2.5" fill="#4a86c8"/><path d="M0.5 7.5 H14.5" stroke="#4a86c8" stroke-width="1"/><rect x="8" y="9" width="8.5" height="7.5" fill="#e8b040"/><path d="M9.5 9 V7 Q12.25 4 15 7 V9" stroke="#b08020" stroke-width="1.2" fill="none"/></svg>
<svg class="a" style="left:378px;top:395px" width="1" height="18" viewBox="0 0 1 18"><rect width="1" height="18" fill="#777"/></svg>
<svg class="a" style="left:386px;top:396px" width="17" height="17" viewBox="0 0 17 17"><path d="M1 3 H10 M1 6 H13 M1 9 H7" stroke="#333" stroke-width="1.2"/><path d="M1 13 H14 V9" stroke="#3a7ad0" stroke-width="1.4" fill="none"/><path d="M11 12 L14 15.5 L14 9 Z" fill="#3a7ad0"/></svg>
<svg class="a" style="left:412px;top:396px" width="10" height="17" viewBox="0 0 10 17"><path d="M4 2 H9 M5 2 V15 M7.5 2 V15" stroke="#3a7ad0" stroke-width="1.8"/><circle cx="3.5" cy="5.5" r="3.2" fill="#3a7ad0"/></svg>
<svg class="a" style="left:434px;top:396px" width="16" height="17" viewBox="0 0 16 17"><path d="M1 0 V17" stroke="#e03030" stroke-width="1" stroke-dasharray="1 1"/><path d="M3 2 H14 M3 5 H11 M5 8 H15 M5 11 H12 M3 14 H14" stroke="#1a3ad8" stroke-width="1.4"/></svg>
<svg class="a" style="left:455px;top:396px" width="16" height="17" viewBox="0 0 16 17"><rect x="0.5" y="0.5" width="15" height="14" fill="#e8f2fc" stroke="#4a86c8" stroke-width="1"/><rect x="0.5" y="0.5" width="15" height="2.5" fill="#4a86c8"/><path d="M10 4 L5 10 H8 L5 15 L12 8 H9 Z" fill="#e8c030"/></svg>
<svg class="a" style="left:478px;top:395px" width="17" height="18" viewBox="0 0 17 18"><rect x="0.5" y="0.5" width="16" height="16" fill="#9ac060" stroke="#333" stroke-width="1"/><path d="M2 2 L15 15" stroke="#e03030" stroke-width="1"/><path d="M1 6 H16 M6 1 V16" stroke="#e8d040" stroke-width="1.5"/></svg>
<svg class="a" style="left:501px;top:396px" width="17" height="17" viewBox="0 0 17 17"><path d="M5 0.5 H12 L16 4.5 V16.5 H5 Z" fill="#fafafa" stroke="#aaa" stroke-width="0.8"/><path d="M9 3 Q6 2 6 6 V13 Q6 16 2 16" stroke="#d82020" stroke-width="2" fill="none"/><path d="M3 8 H10" stroke="#d82020" stroke-width="1.4"/></svg>
<svg class="a" style="left:525px;top:397px" width="15" height="15" viewBox="0 0 15 15"><path d="M0.5 2 H5 L6.5 3.5 H14.5 V13.5 H0.5 Z" fill="#f0b8b8" stroke="#d88888" stroke-width="0.8"/><rect x="0.5" y="6" width="14" height="7.5" fill="#f8d0d0" stroke="#d88888" stroke-width="0.8"/></svg>
<svg class="a" style="left:547px;top:396px" width="18" height="17" viewBox="0 0 18 17"><path d="M0.5 8.5 Q9 0 17.5 8.5 Q9 16 0.5 8.5 Z" fill="#f4f4f4" stroke="#c89060" stroke-width="1.2"/><circle cx="9" cy="8" r="3.5" fill="#5a9ad8"/><circle cx="9" cy="8" r="1.5" fill="#1a2a4a"/></svg>
<svg class="a" style="left:570px;top:395px" width="1" height="18" viewBox="0 0 1 18"><rect width="1" height="18" fill="#777"/></svg>
<svg class="a" style="left:579px;top:396px" width="15" height="17" viewBox="0 0 15 17"><rect x="0.5" y="1.5" width="13.5" height="14" fill="#fafafa" stroke="#777" stroke-width="1"/><circle cx="7.25" cy="8.5" r="3.3" fill="#d00000"/></svg>
<svg class="a" style="left:602px;top:396px" width="15" height="17" viewBox="0 0 15 17"><rect x="0.5" y="1.5" width="13.5" height="14" fill="#fafafa" stroke="#999" stroke-width="1"/><rect x="3.5" y="4.5" width="7.5" height="8" fill="#999" stroke="#777" stroke-width="0.6"/></svg>
<svg class="a" style="left:625px;top:396px" width="14" height="17" viewBox="0 0 14 17"><rect x="0.5" y="1.5" width="12.5" height="14" fill="#fafafa" stroke="#999" stroke-width="1"/><path d="M4.5 4 L10 8.5 L4.5 13 Z" fill="#999"/></svg>
<svg class="a" style="left:648px;top:396px" width="15" height="17" viewBox="0 0 15 17"><rect x="0.5" y="1.5" width="13.5" height="14" fill="#fafafa" stroke="#777" stroke-width="1"/><path d="M3 4 L7.5 8.5 L3 13 Z M7 4 L11.5 8.5 L7 13 Z" fill="#3a7ad0"/></svg>
<svg class="a" style="left:670px;top:396px" width="18" height="18" viewBox="0 0 18 18"><rect x="0.5" y="0.5" width="13" height="13" fill="#9a9a9a"/><rect x="2" y="3" width="4" height="1.5" fill="#e8e8e8"/><rect x="2" y="6" width="4" height="1.5" fill="#e8e8e8"/><rect x="7" y="6" width="6" height="1.5" fill="#e8e8e8"/><rect x="4.5" y="8.5" width="13" height="9" fill="#8a8a8a" stroke="#fff" stroke-width="0.8"/></svg>
<div class="a" style="left:0px;top:418px;width:1078px;height:26px;background:#f0f0f0;"></div>
<div class="a" style="left:0px;top:420px;width:13px;height:4px;background:#f5a33c;"></div>
<div class="a" style="left:0px;top:424px;width:13px;height:20px;background:#fafafa;"></div>
<div class="a" style="left:13px;top:419px;width:1px;height:25px;background:#8a8a8a;"></div>
<svg class="a" style="left:0;top:427px" width="9" height="11"><rect x="-2" y="0" width="10" height="11" fill="#b06f88"/><path d="M0 2 L6 9 M6 2 L0 9" stroke="#fff" stroke-width="1.8"/></svg>
<div class="a" style="left:0px;top:444px;width:1078px;height:2px;background:#a0a0a0;"></div>
<div class="a" style="left:0px;top:446px;width:2px;height:554px;background:#e4e4e4;"></div>
<i class="bw" style="left:3.1px;top:449.1px;transform:scaleX(1.122)">127.0.0.1</i>
<i class="bw" style="left:82.5px;top:449.1px;transform:scaleX(1.050)">-</i>
<i class="bw" style="left:94.0px;top:449.1px;transform:scaleX(1.250)">-</i>
<i class="bw" style="left:107.3px;top:449.1px;transform:scaleX(1.153)">[01/Jul/2018:14:46:15</i>
<i class="bw" style="left:299.9px;top:449.1px;transform:scaleX(1.141)">+0700]</i>
<i class="bw" style="left:363.5px;top:449.1px;transform:scaleX(0.940)">&quot;GET</i>
<i class="bw" style="left:409.5px;top:449.1px;transform:scaleX(1.083)">/onemb.htm</i>
<i class="bw" style="left:513.1px;top:449.1px;transform:scaleX(1.142)">HTTP/1.1&quot;</i>
<i class="bw" style="left:605.7px;top:449.1px;transform:scaleX(1.212)">200</i>
<i class="bw" style="left:643.4px;top:449.1px;transform:scaleX(1.057)">1000000</i>
<i class="bw" style="left:714.5px;top:449.1px;transform:scaleX(0.995)">&quot;-&quot;</i>
<i class="bw" style="left:740.7px;top:449.1px;transform:scaleX(1.103)">&quot;Apache-HttpClient/4.5.5</i>
<i class="bw" style="left:953.9px;top:449.1px;transform:scaleX(1.128)">(Java/10.0.1)&quot;</i>
<i class="bw" style="left:3.1px;top:468.1px;transform:scaleX(1.122)">127.0.0.1</i>
<i class="bw" style="left:82.5px;top:468.1px;transform:scaleX(1.050)">-</i>
<i class="bw" style="left:94.0px;top:468.1px;transform:scaleX(1.250)">-</i>
<i class="bw" style="left:107.3px;top:468.1px;transform:scaleX(1.153)">[01/Jul/2018:14:46:15</i>
<i class="bw" style="left:299.9px;top:468.1px;transform:scaleX(1.141)">+0700]</i>
<i class="bw" style="left:363.5px;top:468.1px;transform:scaleX(0.940)">&quot;GET</i>
<i class="bw" style="left:409.5px;top:468.1px;transform:scaleX(1.083)">/onemb.htm</i>
<i class="bw" style="left:513.1px;top:468.1px;transform:scaleX(1.142)">HTTP/1.1&quot;</i>
<i class="bw" style="left:605.7px;top:468.1px;transform:scaleX(1.212)">200</i>
<i class="bw" style="left:643.4px;top:468.1px;transform:scaleX(1.057)">1000000</i>
<i class="bw" style="left:714.5px;top:468.1px;transform:scaleX(0.995)">&quot;-&quot;</i>
<i class="bw" style="left:740.7px;top:468.1px;transform:scaleX(1.103)">&quot;Apache-HttpClient/4.5.5</i>
<i class="bw" style="left:953.9px;top:468.1px;transform:scaleX(1.128)">(Java/10.0.1)&quot;</i>
<i class="bw" style="left:3.1px;top:487.1px;transform:scaleX(1.122)">127.0.0.1</i>
<i class="bw" style="left:82.5px;top:487.1px;transform:scaleX(1.050)">-</i>
<i class="bw" style="left:94.0px;top:487.1px;transform:scaleX(1.250)">-</i>
<i class="bw" style="left:107.3px;top:487.1px;transform:scaleX(1.153)">[01/Jul/2018:14:46:15</i>
<i class="bw" style="left:299.9px;top:487.1px;transform:scaleX(1.141)">+0700]</i>
<i class="bw" style="left:363.5px;top:487.1px;transform:scaleX(0.940)">&quot;GET</i>
<i class="bw" style="left:409.5px;top:487.1px;transform:scaleX(1.083)">/onemb.htm</i>
<i class="bw" style="left:513.1px;top:487.1px;transform:scaleX(1.142)">HTTP/1.1&quot;</i>
<i class="bw" style="left:605.7px;top:487.1px;transform:scaleX(1.212)">200</i>
<i class="bw" style="left:643.4px;top:487.1px;transform:scaleX(1.057)">1000000</i>
<i class="bw" style="left:714.5px;top:487.1px;transform:scaleX(0.995)">&quot;-&quot;</i>
<i class="bw" style="left:740.7px;top:487.1px;transform:scaleX(1.103)">&quot;Apache-HttpClient/4.5.5</i>
<i class="bw" style="left:953.9px;top:487.1px;transform:scaleX(1.128)">(Java/10.0.1)&quot;</i>
<i class="bw" style="left:3.1px;top:506.1px;transform:scaleX(1.122)">127.0.0.1</i>
<i class="bw" style="left:82.5px;top:506.1px;transform:scaleX(1.050)">-</i>
<i class="bw" style="left:94.0px;top:506.1px;transform:scaleX(1.250)">-</i>
<i class="bw" style="left:107.3px;top:506.1px;transform:scaleX(1.153)">[01/Jul/2018:14:46:15</i>
<i class="bw" style="left:299.9px;top:506.1px;transform:scaleX(1.141)">+0700]</i>
<i class="bw" style="left:363.5px;top:506.1px;transform:scaleX(0.940)">&quot;GET</i>
<i class="bw" style="left:409.5px;top:506.1px;transform:scaleX(1.083)">/onemb.htm</i>
<i class="bw" style="left:513.1px;top:506.1px;transform:scaleX(1.142)">HTTP/1.1&quot;</i>
<i class="bw" style="left:605.7px;top:506.1px;transform:scaleX(1.212)">200</i>
<i class="bw" style="left:643.4px;top:506.1px;transform:scaleX(1.057)">1000000</i>
<i class="bw" style="left:714.5px;top:506.1px;transform:scaleX(0.995)">&quot;-&quot;</i>
<i class="bw" style="left:740.7px;top:506.1px;transform:scaleX(1.103)">&quot;Apache-HttpClient/4.5.5</i>
<i class="bw" style="left:953.9px;top:506.1px;transform:scaleX(1.128)">(Java/10.0.1)&quot;</i>
<i class="bw" style="left:3.1px;top:525.1px;transform:scaleX(1.122)">127.0.0.1</i>
<i class="bw" style="left:82.5px;top:525.1px;transform:scaleX(1.050)">-</i>
<i class="bw" style="left:94.0px;top:525.1px;transform:scaleX(1.250)">-</i>
<i class="bw" style="left:107.3px;top:525.1px;transform:scaleX(1.153)">[01/Jul/2018:14:46:15</i>
<i class="bw" style="left:299.9px;top:525.1px;transform:scaleX(1.141)">+0700]</i>
<i class="bw" style="left:363.5px;top:525.1px;transform:scaleX(0.940)">&quot;GET</i>
<i class="bw" style="left:409.5px;top:525.1px;transform:scaleX(1.083)">/onemb.htm</i>
<i class="bw" style="left:513.1px;top:525.1px;transform:scaleX(1.142)">HTTP/1.1&quot;</i>
<i class="bw" style="left:605.7px;top:525.1px;transform:scaleX(1.212)">200</i>
<i class="bw" style="left:643.4px;top:525.1px;transform:scaleX(1.057)">1000000</i>
<i class="bw" style="left:714.5px;top:525.1px;transform:scaleX(0.995)">&quot;-&quot;</i>
<i class="bw" style="left:740.7px;top:525.1px;transform:scaleX(1.103)">&quot;Apache-HttpClient/4.5.5</i>
<i class="bw" style="left:953.9px;top:525.1px;transform:scaleX(1.128)">(Java/10.0.1)&quot;</i>
<i class="bw" style="left:3.1px;top:544.1px;transform:scaleX(1.122)">127.0.0.1</i>
<i class="bw" style="left:82.5px;top:544.1px;transform:scaleX(1.050)">-</i>
<i class="bw" style="left:94.0px;top:544.1px;transform:scaleX(1.250)">-</i>
<i class="bw" style="left:107.3px;top:544.1px;transform:scaleX(1.153)">[01/Jul/2018:14:46:15</i>
<i class="bw" style="left:299.9px;top:544.1px;transform:scaleX(1.141)">+0700]</i>
<i class="bw" style="left:363.5px;top:544.1px;transform:scaleX(0.940)">&quot;GET</i>
<i class="bw" style="left:409.5px;top:544.1px;transform:scaleX(1.083)">/onemb.htm</i>
<i class="bw" style="left:513.1px;top:544.1px;transform:scaleX(1.142)">HTTP/1.1&quot;</i>
<i class="bw" style="left:605.7px;top:544.1px;transform:scaleX(1.212)">200</i>
<i class="bw" style="left:643.4px;top:544.1px;transform:scaleX(1.057)">1000000</i>
<i class="bw" style="left:714.5px;top:544.1px;transform:scaleX(0.995)">&quot;-&quot;</i>
<i class="bw" style="left:740.7px;top:544.1px;transform:scaleX(1.103)">&quot;Apache-HttpClient/4.5.5</i>
<i class="bw" style="left:953.9px;top:544.1px;transform:scaleX(1.128)">(Java/10.0.1)&quot;</i>
<i class="bw" style="left:3.1px;top:563.1px;transform:scaleX(1.122)">127.0.0.1</i>
<i class="bw" style="left:82.5px;top:563.1px;transform:scaleX(1.050)">-</i>
<i class="bw" style="left:94.0px;top:563.1px;transform:scaleX(1.250)">-</i>
<i class="bw" style="left:107.3px;top:563.1px;transform:scaleX(1.153)">[01/Jul/2018:14:46:15</i>
<i class="bw" style="left:299.9px;top:563.1px;transform:scaleX(1.141)">+0700]</i>
<i class="bw" style="left:363.5px;top:563.1px;transform:scaleX(0.940)">&quot;GET</i>
<i class="bw" style="left:409.5px;top:563.1px;transform:scaleX(1.083)">/onemb.htm</i>
<i class="bw" style="left:513.1px;top:563.1px;transform:scaleX(1.142)">HTTP/1.1&quot;</i>
<i class="bw" style="left:605.7px;top:563.1px;transform:scaleX(1.212)">200</i>
<i class="bw" style="left:643.4px;top:563.1px;transform:scaleX(1.057)">1000000</i>
<i class="bw" style="left:714.5px;top:563.1px;transform:scaleX(0.995)">&quot;-&quot;</i>
<i class="bw" style="left:740.7px;top:563.1px;transform:scaleX(1.103)">&quot;Apache-HttpClient/4.5.5</i>
<i class="bw" style="left:953.9px;top:563.1px;transform:scaleX(1.128)">(Java/10.0.1)&quot;</i>
<i class="bw" style="left:3.1px;top:582.1px;transform:scaleX(1.122)">127.0.0.1</i>
<i class="bw" style="left:82.5px;top:582.1px;transform:scaleX(1.050)">-</i>
<i class="bw" style="left:94.0px;top:582.1px;transform:scaleX(1.250)">-</i>
<i class="bw" style="left:107.3px;top:582.1px;transform:scaleX(1.153)">[01/Jul/2018:14:46:15</i>
<i class="bw" style="left:299.9px;top:582.1px;transform:scaleX(1.141)">+0700]</i>
<i class="bw" style="left:363.5px;top:582.1px;transform:scaleX(0.940)">&quot;GET</i>
<i class="bw" style="left:409.5px;top:582.1px;transform:scaleX(1.083)">/onemb.htm</i>
<i class="bw" style="left:513.1px;top:582.1px;transform:scaleX(1.142)">HTTP/1.1&quot;</i>
<i class="bw" style="left:605.7px;top:582.1px;transform:scaleX(1.212)">200</i>
<i class="bw" style="left:643.4px;top:582.1px;transform:scaleX(1.057)">1000000</i>
<i class="bw" style="left:714.5px;top:582.1px;transform:scaleX(0.995)">&quot;-&quot;</i>
<i class="bw" style="left:740.7px;top:582.1px;transform:scaleX(1.103)">&quot;Apache-HttpClient/4.5.5</i>
<i class="bw" style="left:953.9px;top:582.1px;transform:scaleX(1.128)">(Java/10.0.1)&quot;</i>
<i class="bw" style="left:3.1px;top:601.1px;transform:scaleX(1.122)">127.0.0.1</i>
<i class="bw" style="left:82.5px;top:601.1px;transform:scaleX(1.050)">-</i>
<i class="bw" style="left:94.0px;top:601.1px;transform:scaleX(1.250)">-</i>
<i class="bw" style="left:107.3px;top:601.1px;transform:scaleX(1.153)">[01/Jul/2018:14:46:15</i>
<i class="bw" style="left:299.9px;top:601.1px;transform:scaleX(1.141)">+0700]</i>
<i class="bw" style="left:363.5px;top:601.1px;transform:scaleX(0.940)">&quot;GET</i>
<i class="bw" style="left:409.5px;top:601.1px;transform:scaleX(1.083)">/onemb.htm</i>
<i class="bw" style="left:513.1px;top:601.1px;transform:scaleX(1.142)">HTTP/1.1&quot;</i>
<i class="bw" style="left:605.7px;top:601.1px;transform:scaleX(1.212)">200</i>
<i class="bw" style="left:643.4px;top:601.1px;transform:scaleX(1.057)">1000000</i>
<i class="bw" style="left:714.5px;top:601.1px;transform:scaleX(0.995)">&quot;-&quot;</i>
<i class="bw" style="left:740.7px;top:601.1px;transform:scaleX(1.103)">&quot;Apache-HttpClient/4.5.5</i>
<i class="bw" style="left:953.9px;top:601.1px;transform:scaleX(1.128)">(Java/10.0.1)&quot;</i>
<i class="bw" style="left:3.1px;top:620.1px;transform:scaleX(1.122)">127.0.0.1</i>
<i class="bw" style="left:82.5px;top:620.1px;transform:scaleX(1.050)">-</i>
<i class="bw" style="left:94.0px;top:620.1px;transform:scaleX(1.250)">-</i>
<i class="bw" style="left:107.3px;top:620.1px;transform:scaleX(1.153)">[01/Jul/2018:14:46:15</i>
<i class="bw" style="left:299.9px;top:620.1px;transform:scaleX(1.141)">+0700]</i>
<i class="bw" style="left:363.5px;top:620.1px;transform:scaleX(0.940)">&quot;GET</i>
<i class="bw" style="left:409.5px;top:620.1px;transform:scaleX(1.083)">/onemb.htm</i>
<i class="bw" style="left:513.1px;top:620.1px;transform:scaleX(1.142)">HTTP/1.1&quot;</i>
<i class="bw" style="left:605.7px;top:620.1px;transform:scaleX(1.212)">200</i>
<i class="bw" style="left:643.4px;top:620.1px;transform:scaleX(1.057)">1000000</i>
<i class="bw" style="left:714.5px;top:620.1px;transform:scaleX(0.995)">&quot;-&quot;</i>
<i class="bw" style="left:740.7px;top:620.1px;transform:scaleX(1.103)">&quot;Apache-HttpClient/4.5.5</i>
<i class="bw" style="left:953.9px;top:620.1px;transform:scaleX(1.128)">(Java/10.0.1)&quot;</i>
<i class="bw" style="left:3.1px;top:639.1px;transform:scaleX(1.122)">127.0.0.1</i>
<i class="bw" style="left:82.5px;top:639.1px;transform:scaleX(1.050)">-</i>
<i class="bw" style="left:94.0px;top:639.1px;transform:scaleX(1.250)">-</i>
<i class="bw" style="left:107.3px;top:639.1px;transform:scaleX(1.153)">[01/Jul/2018:14:46:15</i>
<i class="bw" style="left:299.9px;top:639.1px;transform:scaleX(1.141)">+0700]</i>
<i class="bw" style="left:363.5px;top:639.1px;transform:scaleX(0.940)">&quot;GET</i>
<i class="bw" style="left:409.5px;top:639.1px;transform:scaleX(1.083)">/onemb.htm</i>
<i class="bw" style="left:513.1px;top:639.1px;transform:scaleX(1.142)">HTTP/1.1&quot;</i>
<i class="bw" style="left:605.7px;top:639.1px;transform:scaleX(1.212)">200</i>
<i class="bw" style="left:643.4px;top:639.1px;transform:scaleX(1.057)">1000000</i>
<i class="bw" style="left:714.5px;top:639.1px;transform:scaleX(0.995)">&quot;-&quot;</i>
<i class="bw" style="left:740.7px;top:639.1px;transform:scaleX(1.103)">&quot;Apache-HttpClient/4.5.5</i>
<i class="bw" style="left:953.9px;top:639.1px;transform:scaleX(1.128)">(Java/10.0.1)&quot;</i>
<i class="bw" style="left:3.1px;top:658.1px;transform:scaleX(1.122)">127.0.0.1</i>
<i class="bw" style="left:82.5px;top:658.1px;transform:scaleX(1.050)">-</i>
<i class="bw" style="left:94.0px;top:658.1px;transform:scaleX(1.250)">-</i>
<i class="bw" style="left:107.3px;top:658.1px;transform:scaleX(1.153)">[01/Jul/2018:14:46:15</i>
<i class="bw" style="left:299.9px;top:658.1px;transform:scaleX(1.141)">+0700]</i>
<i class="bw" style="left:363.5px;top:658.1px;transform:scaleX(0.940)">&quot;GET</i>
<i class="bw" style="left:409.5px;top:658.1px;transform:scaleX(1.083)">/onemb.htm</i>
<i class="bw" style="left:513.1px;top:658.1px;transform:scaleX(1.142)">HTTP/1.1&quot;</i>
<i class="bw" style="left:605.7px;top:658.1px;transform:scaleX(1.212)">200</i>
<i class="bw" style="left:643.4px;top:658.1px;transform:scaleX(1.057)">1000000</i>
<i class="bw" style="left:714.5px;top:658.1px;transform:scaleX(0.995)">&quot;-&quot;</i>
<i class="bw" style="left:740.7px;top:658.1px;transform:scaleX(1.103)">&quot;Apache-HttpClient/4.5.5</i>
<i class="bw" style="left:953.9px;top:658.1px;transform:scaleX(1.128)">(Java/10.0.1)&quot;</i>
<i class="bw" style="left:3.1px;top:677.1px;transform:scaleX(1.122)">127.0.0.1</i>
<i class="bw" style="left:82.5px;top:677.1px;transform:scaleX(1.050)">-</i>
<i class="bw" style="left:94.0px;top:677.1px;transform:scaleX(1.250)">-</i>
<i class="bw" style="left:107.3px;top:677.1px;transform:scaleX(1.153)">[01/Jul/2018:14:46:15</i>
<i class="bw" style="left:299.9px;top:677.1px;transform:scaleX(1.141)">+0700]</i>
<i class="bw" style="left:363.5px;top:677.1px;transform:scaleX(0.940)">&quot;GET</i>
<i class="bw" style="left:409.5px;top:677.1px;transform:scaleX(1.083)">/onemb.htm</i>
<i class="bw" style="left:513.1px;top:677.1px;transform:scaleX(1.142)">HTTP/1.1&quot;</i>
<i class="bw" style="left:605.7px;top:677.1px;transform:scaleX(1.212)">200</i>
<i class="bw" style="left:643.4px;top:677.1px;transform:scaleX(1.057)">1000000</i>
<i class="bw" style="left:714.5px;top:677.1px;transform:scaleX(0.995)">&quot;-&quot;</i>
<i class="bw" style="left:740.7px;top:677.1px;transform:scaleX(1.103)">&quot;Apache-HttpClient/4.5.5</i>
<i class="bw" style="left:953.9px;top:677.1px;transform:scaleX(1.128)">(Java/10.0.1)&quot;</i>
<i class="bw" style="left:3.1px;top:696.1px;transform:scaleX(1.122)">127.0.0.1</i>
<i class="bw" style="left:82.5px;top:696.1px;transform:scaleX(1.050)">-</i>
<i class="bw" style="left:94.0px;top:696.1px;transform:scaleX(1.250)">-</i>
<i class="bw" style="left:107.3px;top:696.1px;transform:scaleX(1.153)">[01/Jul/2018:14:46:15</i>
<i class="bw" style="left:299.9px;top:696.1px;transform:scaleX(1.141)">+0700]</i>
<i class="bw" style="left:363.5px;top:696.1px;transform:scaleX(0.940)">&quot;GET</i>
<i class="bw" style="left:409.5px;top:696.1px;transform:scaleX(1.083)">/onemb.htm</i>
<i class="bw" style="left:513.1px;top:696.1px;transform:scaleX(1.142)">HTTP/1.1&quot;</i>
<i class="bw" style="left:605.7px;top:696.1px;transform:scaleX(1.212)">200</i>
<i class="bw" style="left:643.4px;top:696.1px;transform:scaleX(1.057)">1000000</i>
<i class="bw" style="left:714.5px;top:696.1px;transform:scaleX(0.995)">&quot;-&quot;</i>
<i class="bw" style="left:740.7px;top:696.1px;transform:scaleX(1.103)">&quot;Apache-HttpClient/4.5.5</i>
<i class="bw" style="left:953.9px;top:696.1px;transform:scaleX(1.128)">(Java/10.0.1)&quot;</i>
<i class="bw" style="left:3.1px;top:715.1px;transform:scaleX(1.122)">127.0.0.1</i>
<i class="bw" style="left:82.5px;top:715.1px;transform:scaleX(1.050)">-</i>
<i class="bw" style="left:94.0px;top:715.1px;transform:scaleX(1.250)">-</i>
<i class="bw" style="left:107.3px;top:715.1px;transform:scaleX(1.153)">[01/Jul/2018:14:46:15</i>
<i class="bw" style="left:299.9px;top:715.1px;transform:scaleX(1.141)">+0700]</i>
<i class="bw" style="left:363.5px;top:715.1px;transform:scaleX(0.940)">&quot;GET</i>
<i class="bw" style="left:409.5px;top:715.1px;transform:scaleX(1.083)">/onemb.htm</i>
<i class="bw" style="left:513.1px;top:715.1px;transform:scaleX(1.142)">HTTP/1.1&quot;</i>
<i class="bw" style="left:605.7px;top:715.1px;transform:scaleX(1.212)">200</i>
<i class="bw" style="left:643.4px;top:715.1px;transform:scaleX(1.057)">1000000</i>
<i class="bw" style="left:714.5px;top:715.1px;transform:scaleX(0.995)">&quot;-&quot;</i>
<i class="bw" style="left:740.7px;top:715.1px;transform:scaleX(1.103)">&quot;Apache-HttpClient/4.5.5</i>
<i class="bw" style="left:953.9px;top:715.1px;transform:scaleX(1.128)">(Java/10.0.1)&quot;</i>
<i class="bw" style="left:3.1px;top:734.1px;transform:scaleX(1.122)">127.0.0.1</i>
<i class="bw" style="left:82.5px;top:734.1px;transform:scaleX(1.050)">-</i>
<i class="bw" style="left:94.0px;top:734.1px;transform:scaleX(1.250)">-</i>
<i class="bw" style="left:107.3px;top:734.1px;transform:scaleX(1.153)">[01/Jul/2018:14:46:15</i>
<i class="bw" style="left:299.9px;top:734.1px;transform:scaleX(1.141)">+0700]</i>
<i class="bw" style="left:363.5px;top:734.1px;transform:scaleX(0.940)">&quot;GET</i>
<i class="bw" style="left:409.5px;top:734.1px;transform:scaleX(1.083)">/onemb.htm</i>
<i class="bw" style="left:513.1px;top:734.1px;transform:scaleX(1.142)">HTTP/1.1&quot;</i>
<i class="bw" style="left:605.7px;top:734.1px;transform:scaleX(1.212)">200</i>
<i class="bw" style="left:643.4px;top:734.1px;transform:scaleX(1.057)">1000000</i>
<i class="bw" style="left:714.5px;top:734.1px;transform:scaleX(0.995)">&quot;-&quot;</i>
<i class="bw" style="left:740.7px;top:734.1px;transform:scaleX(1.103)">&quot;Apache-HttpClient/4.5.5</i>
<i class="bw" style="left:953.9px;top:734.1px;transform:scaleX(1.128)">(Java/10.0.1)&quot;</i>
<i class="bw" style="left:3.1px;top:753.1px;transform:scaleX(1.122)">127.0.0.1</i>
<i class="bw" style="left:82.5px;top:753.1px;transform:scaleX(1.050)">-</i>
<i class="bw" style="left:94.0px;top:753.1px;transform:scaleX(1.250)">-</i>
<i class="bw" style="left:107.3px;top:753.1px;transform:scaleX(1.153)">[01/Jul/2018:14:46:15</i>
<i class="bw" style="left:299.9px;top:753.1px;transform:scaleX(1.141)">+0700]</i>
<i class="bw" style="left:363.5px;top:753.1px;transform:scaleX(0.940)">&quot;GET</i>
<i class="bw" style="left:409.5px;top:753.1px;transform:scaleX(1.083)">/onemb.htm</i>
<i class="bw" style="left:513.1px;top:753.1px;transform:scaleX(1.142)">HTTP/1.1&quot;</i>
<i class="bw" style="left:605.7px;top:753.1px;transform:scaleX(1.212)">200</i>
<i class="bw" style="left:643.4px;top:753.1px;transform:scaleX(1.057)">1000000</i>
<i class="bw" style="left:714.5px;top:753.1px;transform:scaleX(0.995)">&quot;-&quot;</i>
<i class="bw" style="left:740.7px;top:753.1px;transform:scaleX(1.103)">&quot;Apache-HttpClient/4.5.5</i>
<i class="bw" style="left:953.9px;top:753.1px;transform:scaleX(1.128)">(Java/10.0.1)&quot;</i>
<i class="bw" style="left:3.1px;top:772.1px;transform:scaleX(1.122)">127.0.0.1</i>
<i class="bw" style="left:82.5px;top:772.1px;transform:scaleX(1.050)">-</i>
<i class="bw" style="left:94.0px;top:772.1px;transform:scaleX(1.250)">-</i>
<i class="bw" style="left:107.3px;top:772.1px;transform:scaleX(1.153)">[01/Jul/2018:14:46:15</i>
<i class="bw" style="left:299.9px;top:772.1px;transform:scaleX(1.141)">+0700]</i>
<i class="bw" style="left:363.5px;top:772.1px;transform:scaleX(0.940)">&quot;GET</i>
<i class="bw" style="left:409.5px;top:772.1px;transform:scaleX(1.083)">/onemb.htm</i>
<i class="bw" style="left:513.1px;top:772.1px;transform:scaleX(1.142)">HTTP/1.1&quot;</i>
<i class="bw" style="left:605.7px;top:772.1px;transform:scaleX(1.212)">200</i>
<i class="bw" style="left:643.4px;top:772.1px;transform:scaleX(1.057)">1000000</i>
<i class="bw" style="left:714.5px;top:772.1px;transform:scaleX(0.995)">&quot;-&quot;</i>
<i class="bw" style="left:740.7px;top:772.1px;transform:scaleX(1.103)">&quot;Apache-HttpClient/4.5.5</i>
<i class="bw" style="left:953.9px;top:772.1px;transform:scaleX(1.128)">(Java/10.0.1)&quot;</i>
<i class="bw" style="left:3.1px;top:791.1px;transform:scaleX(1.122)">127.0.0.1</i>
<i class="bw" style="left:82.5px;top:791.1px;transform:scaleX(1.050)">-</i>
<i class="bw" style="left:94.0px;top:791.1px;transform:scaleX(1.250)">-</i>
<i class="bw" style="left:107.3px;top:791.1px;transform:scaleX(1.153)">[01/Jul/2018:14:46:15</i>
<i class="bw" style="left:299.9px;top:791.1px;transform:scaleX(1.141)">+0700]</i>
<i class="bw" style="left:363.5px;top:791.1px;transform:scaleX(0.940)">&quot;GET</i>
<i class="bw" style="left:409.5px;top:791.1px;transform:scaleX(1.083)">/onemb.htm</i>
<i class="bw" style="left:513.1px;top:791.1px;transform:scaleX(1.142)">HTTP/1.1&quot;</i>
<i class="bw" style="left:605.7px;top:791.1px;transform:scaleX(1.212)">200</i>
<i class="bw" style="left:643.4px;top:791.1px;transform:scaleX(1.057)">1000000</i>
<i class="bw" style="left:714.5px;top:791.1px;transform:scaleX(0.995)">&quot;-&quot;</i>
<i class="bw" style="left:740.7px;top:791.1px;transform:scaleX(1.103)">&quot;Apache-HttpClient/4.5.5</i>
<i class="bw" style="left:953.9px;top:791.1px;transform:scaleX(1.128)">(Java/10.0.1)&quot;</i>
<i class="bw" style="left:3.1px;top:810.1px;transform:scaleX(1.122)">127.0.0.1</i>
<i class="bw" style="left:82.5px;top:810.1px;transform:scaleX(1.050)">-</i>
<i class="bw" style="left:94.0px;top:810.1px;transform:scaleX(1.250)">-</i>
<i class="bw" style="left:107.3px;top:810.1px;transform:scaleX(1.153)">[01/Jul/2018:14:46:15</i>
<i class="bw" style="left:299.9px;top:810.1px;transform:scaleX(1.141)">+0700]</i>
<i class="bw" style="left:363.5px;top:810.1px;transform:scaleX(0.940)">&quot;GET</i>
<i class="bw" style="left:409.5px;top:810.1px;transform:scaleX(1.083)">/onemb.htm</i>
<i class="bw" style="left:513.1px;top:810.1px;transform:scaleX(1.142)">HTTP/1.1&quot;</i>
<i class="bw" style="left:605.7px;top:810.1px;transform:scaleX(1.212)">200</i>
<i class="bw" style="left:643.4px;top:810.1px;transform:scaleX(1.057)">1000000</i>
<i class="bw" style="left:714.5px;top:810.1px;transform:scaleX(0.995)">&quot;-&quot;</i>
<i class="bw" style="left:740.7px;top:810.1px;transform:scaleX(1.103)">&quot;Apache-HttpClient/4.5.5</i>
<i class="bw" style="left:953.9px;top:810.1px;transform:scaleX(1.128)">(Java/10.0.1)&quot;</i>
<i class="bw" style="left:3.1px;top:829.1px;transform:scaleX(1.122)">127.0.0.1</i>
<i class="bw" style="left:82.5px;top:829.1px;transform:scaleX(1.050)">-</i>
<i class="bw" style="left:94.0px;top:829.1px;transform:scaleX(1.250)">-</i>
<i class="bw" style="left:107.3px;top:829.1px;transform:scaleX(1.153)">[01/Jul/2018:14:46:15</i>
<i class="bw" style="left:299.9px;top:829.1px;transform:scaleX(1.141)">+0700]</i>
<i class="bw" style="left:363.5px;top:829.1px;transform:scaleX(0.940)">&quot;GET</i>
<i class="bw" style="left:409.5px;top:829.1px;transform:scaleX(1.083)">/onemb.htm</i>
<i class="bw" style="left:513.1px;top:829.1px;transform:scaleX(1.142)">HTTP/1.1&quot;</i>
<i class="bw" style="left:605.7px;top:829.1px;transform:scaleX(1.212)">200</i>
<i class="bw" style="left:643.4px;top:829.1px;transform:scaleX(1.057)">1000000</i>
<i class="bw" style="left:714.5px;top:829.1px;transform:scaleX(0.995)">&quot;-&quot;</i>
<i class="bw" style="left:740.7px;top:829.1px;transform:scaleX(1.103)">&quot;Apache-HttpClient/4.5.5</i>
<i class="bw" style="left:953.9px;top:829.1px;transform:scaleX(1.128)">(Java/10.0.1)&quot;</i>
<i class="bw" style="left:3.1px;top:848.1px;transform:scaleX(1.122)">127.0.0.1</i>
<i class="bw" style="left:82.5px;top:848.1px;transform:scaleX(1.050)">-</i>
<i class="bw" style="left:94.0px;top:848.1px;transform:scaleX(1.250)">-</i>
<i class="bw" style="left:107.3px;top:848.1px;transform:scaleX(1.153)">[01/Jul/2018:14:46:15</i>
<i class="bw" style="left:299.9px;top:848.1px;transform:scaleX(1.141)">+0700]</i>
<i class="bw" style="left:363.5px;top:848.1px;transform:scaleX(0.940)">&quot;GET</i>
<i class="bw" style="left:409.5px;top:848.1px;transform:scaleX(1.083)">/onemb.htm</i>
<i class="bw" style="left:513.1px;top:848.1px;transform:scaleX(1.142)">HTTP/1.1&quot;</i>
<i class="bw" style="left:605.7px;top:848.1px;transform:scaleX(1.212)">200</i>
<i class="bw" style="left:643.4px;top:848.1px;transform:scaleX(1.057)">1000000</i>
<i class="bw" style="left:714.5px;top:848.1px;transform:scaleX(0.995)">&quot;-&quot;</i>
<i class="bw" style="left:740.7px;top:848.1px;transform:scaleX(1.103)">&quot;Apache-HttpClient/4.5.5</i>
<i class="bw" style="left:953.9px;top:848.1px;transform:scaleX(1.128)">(Java/10.0.1)&quot;</i>
<i class="bw" style="left:3.1px;top:867.1px;transform:scaleX(1.122)">127.0.0.1</i>
<i class="bw" style="left:82.5px;top:867.1px;transform:scaleX(1.050)">-</i>
<i class="bw" style="left:94.0px;top:867.1px;transform:scaleX(1.250)">-</i>
<i class="bw" style="left:107.3px;top:867.1px;transform:scaleX(1.153)">[01/Jul/2018:14:46:15</i>
<i class="bw" style="left:299.9px;top:867.1px;transform:scaleX(1.141)">+0700]</i>
<i class="bw" style="left:363.5px;top:867.1px;transform:scaleX(0.940)">&quot;GET</i>
<i class="bw" style="left:409.5px;top:867.1px;transform:scaleX(1.083)">/onemb.htm</i>
<i class="bw" style="left:513.1px;top:867.1px;transform:scaleX(1.142)">HTTP/1.1&quot;</i>
<i class="bw" style="left:605.7px;top:867.1px;transform:scaleX(1.212)">200</i>
<i class="bw" style="left:643.4px;top:867.1px;transform:scaleX(1.057)">1000000</i>
<i class="bw" style="left:714.5px;top:867.1px;transform:scaleX(0.995)">&quot;-&quot;</i>
<i class="bw" style="left:740.7px;top:867.1px;transform:scaleX(1.103)">&quot;Apache-HttpClient/4.5.5</i>
<i class="bw" style="left:953.9px;top:867.1px;transform:scaleX(1.128)">(Java/10.0.1)&quot;</i>
<i class="bw" style="left:3.1px;top:886.1px;transform:scaleX(1.122)">127.0.0.1</i>
<i class="bw" style="left:82.5px;top:886.1px;transform:scaleX(1.050)">-</i>
<i class="bw" style="left:94.0px;top:886.1px;transform:scaleX(1.250)">-</i>
<i class="bw" style="left:107.3px;top:886.1px;transform:scaleX(1.153)">[01/Jul/2018:14:46:15</i>
<i class="bw" style="left:299.9px;top:886.1px;transform:scaleX(1.141)">+0700]</i>
<i class="bw" style="left:363.5px;top:886.1px;transform:scaleX(0.940)">&quot;GET</i>
<i class="bw" style="left:409.5px;top:886.1px;transform:scaleX(1.083)">/onemb.htm</i>
<i class="bw" style="left:513.1px;top:886.1px;transform:scaleX(1.142)">HTTP/1.1&quot;</i>
<i class="bw" style="left:605.7px;top:886.1px;transform:scaleX(1.212)">200</i>
<i class="bw" style="left:643.4px;top:886.1px;transform:scaleX(1.057)">1000000</i>
<i class="bw" style="left:714.5px;top:886.1px;transform:scaleX(0.995)">&quot;-&quot;</i>
<i class="bw" style="left:740.7px;top:886.1px;transform:scaleX(1.103)">&quot;Apache-HttpClient/4.5.5</i>
<i class="bw" style="left:953.9px;top:886.1px;transform:scaleX(1.128)">(Java/10.0.1)&quot;</i>
<i class="bw" style="left:3.1px;top:905.1px;transform:scaleX(1.122)">127.0.0.1</i>
<i class="bw" style="left:82.5px;top:905.1px;transform:scaleX(1.050)">-</i>
<i class="bw" style="left:94.0px;top:905.1px;transform:scaleX(1.250)">-</i>
<i class="bw" style="left:107.3px;top:905.1px;transform:scaleX(1.153)">[01/Jul/2018:14:46:15</i>
<i class="bw" style="left:299.9px;top:905.1px;transform:scaleX(1.141)">+0700]</i>
<i class="bw" style="left:363.5px;top:905.1px;transform:scaleX(0.940)">&quot;GET</i>
<i class="bw" style="left:409.5px;top:905.1px;transform:scaleX(1.083)">/onemb.htm</i>
<i class="bw" style="left:513.1px;top:905.1px;transform:scaleX(1.142)">HTTP/1.1&quot;</i>
<i class="bw" style="left:605.7px;top:905.1px;transform:scaleX(1.212)">200</i>
<i class="bw" style="left:643.4px;top:905.1px;transform:scaleX(1.057)">1000000</i>
<i class="bw" style="left:714.5px;top:905.1px;transform:scaleX(0.995)">&quot;-&quot;</i>
<i class="bw" style="left:740.7px;top:905.1px;transform:scaleX(1.103)">&quot;Apache-HttpClient/4.5.5</i>
<i class="bw" style="left:953.9px;top:905.1px;transform:scaleX(1.128)">(Java/10.0.1)&quot;</i>
<i class="bw" style="left:3.1px;top:924.1px;transform:scaleX(1.122)">127.0.0.1</i>
<i class="bw" style="left:82.5px;top:924.1px;transform:scaleX(1.050)">-</i>
<i class="bw" style="left:94.0px;top:924.1px;transform:scaleX(1.250)">-</i>
<i class="bw" style="left:107.3px;top:924.1px;transform:scaleX(1.153)">[01/Jul/2018:14:46:15</i>
<i class="bw" style="left:299.9px;top:924.1px;transform:scaleX(1.141)">+0700]</i>
<i class="bw" style="left:363.5px;top:924.1px;transform:scaleX(0.940)">&quot;GET</i>
<i class="bw" style="left:409.5px;top:924.1px;transform:scaleX(1.083)">/onemb.htm</i>
<i class="bw" style="left:513.1px;top:924.1px;transform:scaleX(1.142)">HTTP/1.1&quot;</i>
<i class="bw" style="left:605.7px;top:924.1px;transform:scaleX(1.212)">200</i>
<i class="bw" style="left:643.4px;top:924.1px;transform:scaleX(1.057)">1000000</i>
<i class="bw" style="left:714.5px;top:924.1px;transform:scaleX(0.995)">&quot;-&quot;</i>
<i class="bw" style="left:740.7px;top:924.1px;transform:scaleX(1.103)">&quot;Apache-HttpClient/4.5.5</i>
<i class="bw" style="left:953.9px;top:924.1px;transform:scaleX(1.128)">(Java/10.0.1)&quot;</i>
<i class="bw" style="left:3.1px;top:943.1px;transform:scaleX(1.122)">127.0.0.1</i>
<i class="bw" style="left:82.5px;top:943.1px;transform:scaleX(1.050)">-</i>
<i class="bw" style="left:94.0px;top:943.1px;transform:scaleX(1.250)">-</i>
<i class="bw" style="left:107.3px;top:943.1px;transform:scaleX(1.153)">[01/Jul/2018:14:46:16</i>
<i class="bw" style="left:299.9px;top:943.1px;transform:scaleX(1.141)">+0700]</i>
<i class="bw" style="left:363.5px;top:943.1px;transform:scaleX(0.940)">&quot;GET</i>
<i class="bw" style="left:409.5px;top:943.1px;transform:scaleX(1.083)">/onemb.htm</i>
<i class="bw" style="left:513.1px;top:943.1px;transform:scaleX(1.142)">HTTP/1.1&quot;</i>
<i class="bw" style="left:605.7px;top:943.1px;transform:scaleX(1.212)">200</i>
<i class="bw" style="left:643.4px;top:943.1px;transform:scaleX(1.057)">1000000</i>
<i class="bw" style="left:714.5px;top:943.1px;transform:scaleX(0.995)">&quot;-&quot;</i>
<i class="bw" style="left:740.7px;top:943.1px;transform:scaleX(1.103)">&quot;Apache-HttpClient/4.5.5</i>
<i class="bw" style="left:953.9px;top:943.1px;transform:scaleX(1.128)">(Java/10.0.1)&quot;</i>
<i class="bw" style="left:3.1px;top:962.1px;transform:scaleX(1.122)">127.0.0.1</i>
<i class="bw" style="left:82.5px;top:962.1px;transform:scaleX(1.050)">-</i>
<i class="bw" style="left:94.0px;top:962.1px;transform:scaleX(1.250)">-</i>
<i class="bw" style="left:107.3px;top:962.1px;transform:scaleX(1.153)">[01/Jul/2018:14:46:16</i>
<i class="bw" style="left:299.9px;top:962.1px;transform:scaleX(1.141)">+0700]</i>
<i class="bw" style="left:363.5px;top:962.1px;transform:scaleX(0.940)">&quot;GET</i>
<i class="bw" style="left:409.5px;top:962.1px;transform:scaleX(1.083)">/onemb.htm</i>
<i class="bw" style="left:513.1px;top:962.1px;transform:scaleX(1.142)">HTTP/1.1&quot;</i>
<i class="bw" style="left:605.7px;top:962.1px;transform:scaleX(1.212)">200</i>
<i class="bw" style="left:643.4px;top:962.1px;transform:scaleX(1.057)">1000000</i>
<i class="bw" style="left:714.5px;top:962.1px;transform:scaleX(0.995)">&quot;-&quot;</i>
<i class="bw" style="left:740.7px;top:962.1px;transform:scaleX(1.103)">&quot;Apache-HttpClient/4.5.5</i>
<i class="bw" style="left:953.9px;top:962.1px;transform:scaleX(1.128)">(Java/10.0.1)&quot;</i>
<i class="bw" style="left:3.1px;top:981.1px;transform:scaleX(1.122)">127.0.0.1</i>
<i class="bw" style="left:82.5px;top:981.1px;transform:scaleX(1.050)">-</i>
<i class="bw" style="left:94.0px;top:981.1px;transform:scaleX(1.250)">-</i>
<i class="bw" style="left:107.3px;top:981.1px;transform:scaleX(1.153)">[01/Jul/2018:14:46:16</i>
<i class="bw" style="left:299.9px;top:981.1px;transform:scaleX(1.141)">+0700]</i>
<i class="bw" style="left:363.5px;top:981.1px;transform:scaleX(0.940)">&quot;GET</i>
<i class="bw" style="left:409.5px;top:981.1px;transform:scaleX(1.083)">/onemb.htm</i>
<i class="bw" style="left:513.1px;top:981.1px;transform:scaleX(1.142)">HTTP/1.1&quot;</i>
<i class="bw" style="left:605.7px;top:981.1px;transform:scaleX(1.212)">200</i>
<i class="bw" style="left:643.4px;top:981.1px;transform:scaleX(1.057)">1000000</i>
<i class="bw" style="left:714.5px;top:981.1px;transform:scaleX(0.995)">&quot;-&quot;</i>
<i class="bw" style="left:740.7px;top:981.1px;transform:scaleX(1.103)">&quot;Apache-HttpClient/4.5.5</i>
<i class="bw" style="left:953.9px;top:981.1px;transform:scaleX(1.128)">(Java/10.0.1)&quot;</i>
<div class="a" style="left:19px;top:464px;width:1059px;height:343px;box-shadow:0 4px 14px rgba(0,0,0,0.28)"></div>
<div class="a" style="left:19px;top:464px;width:1059px;height:343px;background:#fff;border:1px solid #2a83d8;border-right:none;overflow:hidden">
</div>
<svg class="a" style="left:29px;top:471px" width="16" height="17" viewBox="0 0 16 17"><path d="M3 2 H14 L12 16 H1 Z" fill="#a8d4e6" stroke="#6a9ab0" stroke-width="0.8"/><path d="M3.2 5 H13.5 M2.8 8 H13 M2.4 11 H12.6 M2 14 H12.2" stroke="#7fb6cc" stroke-width="0.8"/><path d="M3 1.5 H14" stroke="#555" stroke-width="1.2" stroke-dasharray="1 1"/><path d="M12 16 L14 2 L14.5 16 Z" fill="#d9c7a0"/></svg>
<div class="t" style="left:49.5px;top:473.50px;font-size:11.7px;color:#000;font-weight:normal;">access.log - Notepad</div>
<div class="a" style="left:1063px;top:479px;width:10px;height:1px;background:#000;"></div>
<div class="t" style="left:27.2px;top:498.51px;font-size:11.8px;color:#000;font-weight:normal;">File</div>
<div class="t" style="left:59px;top:498.51px;font-size:11.8px;color:#000;font-weight:normal;">Edit</div>
<div class="t" style="left:93.4px;top:498.51px;font-size:11.8px;color:#000;font-weight:normal;">Format</div>
<div class="t" style="left:145.3px;top:498.51px;font-size:11.8px;color:#000;font-weight:normal;">View</div>
<div class="t" style="left:184.3px;top:498.51px;font-size:11.8px;color:#000;font-weight:normal;">Help</div>
<div class="a" style="left:20px;top:513px;width:1058px;height:1px;background:#f0f0f0;"></div>
<i class="nw" style="left:25.3px;top:517.6px;transform:scaleX(1.184)">127.0.0.1</i>
<i class="nw" style="left:108.1px;top:517.6px;transform:scaleX(1.090)">–</i>
<i class="nw" style="left:126.7px;top:517.6px;transform:scaleX(1.186)">–</i>
<i class="nw" style="left:143.0px;top:517.6px;transform:scaleX(1.225)">[01/Jul/2018:14:46:16</i>
<i class="nw" style="left:333.3px;top:517.6px;transform:scaleX(1.344)">+0700]</i>
<i class="nw" style="left:403.1px;top:517.6px;transform:scaleX(0.981)">&quot;GET</i>
<i class="nw" style="left:448.0px;top:517.6px;transform:scaleX(1.214)">/onemb.htm</i>
<i class="nw" style="left:551.6px;top:517.6px;transform:scaleX(1.099)">HTTP/1.1&quot;</i>
<i class="nw" style="left:638.3px;top:517.6px;transform:scaleX(1.266)">200</i>
<i class="nw" style="left:679.1px;top:517.6px;transform:scaleX(1.292)">1000000</i>
<i class="nw" style="left:764.8px;top:517.6px;transform:scaleX(1.255)">&quot;–&quot;</i>
<i class="nw" style="left:793.4px;top:517.6px;transform:scaleX(1.256)">&quot;Apache–HttpClient/4.5.5</i>
<i class="nw" style="left:1017.4px;top:517.6px;transform:scaleX(1.250)">(Java/10.0.1)&quot;</i>
<i class="nw" style="left:25.3px;top:542.6px;transform:scaleX(1.184)">127.0.0.1</i>
<i class="nw" style="left:108.1px;top:542.6px;transform:scaleX(1.090)">–</i>
<i class="nw" style="left:126.7px;top:542.6px;transform:scaleX(1.186)">–</i>
<i class="nw" style="left:143.0px;top:542.6px;transform:scaleX(1.225)">[01/Jul/2018:14:46:16</i>
<i class="nw" style="left:333.3px;top:542.6px;transform:scaleX(1.344)">+0700]</i>
<i class="nw" style="left:403.1px;top:542.6px;transform:scaleX(0.981)">&quot;GET</i>
<i class="nw" style="left:448.0px;top:542.6px;transform:scaleX(1.214)">/onemb.htm</i>
<i class="nw" style="left:551.6px;top:542.6px;transform:scaleX(1.099)">HTTP/1.1&quot;</i>
<i class="nw" style="left:638.3px;top:542.6px;transform:scaleX(1.266)">200</i>
<i class="nw" style="left:679.1px;top:542.6px;transform:scaleX(1.292)">1000000</i>
<i class="nw" style="left:764.8px;top:542.6px;transform:scaleX(1.255)">&quot;–&quot;</i>
<i class="nw" style="left:793.4px;top:542.6px;transform:scaleX(1.256)">&quot;Apache–HttpClient/4.5.5</i>
<i class="nw" style="left:1017.4px;top:542.6px;transform:scaleX(1.250)">(Java/10.0.1)&quot;</i>
<i class="nw" style="left:25.3px;top:567.6px;transform:scaleX(1.184)">127.0.0.1</i>
<i class="nw" style="left:108.1px;top:567.6px;transform:scaleX(1.090)">–</i>
<i class="nw" style="left:126.7px;top:567.6px;transform:scaleX(1.186)">–</i>
<i class="nw" style="left:143.0px;top:567.6px;transform:scaleX(1.225)">[01/Jul/2018:14:46:16</i>
<i class="nw" style="left:333.3px;top:567.6px;transform:scaleX(1.344)">+0700]</i>
<i class="nw" style="left:403.1px;top:567.6px;transform:scaleX(0.981)">&quot;GET</i>
<i class="nw" style="left:448.0px;top:567.6px;transform:scaleX(1.214)">/onemb.htm</i>
<i class="nw" style="left:551.6px;top:567.6px;transform:scaleX(1.099)">HTTP/1.1&quot;</i>
<i class="nw" style="left:638.3px;top:567.6px;transform:scaleX(1.266)">200</i>
<i class="nw" style="left:679.1px;top:567.6px;transform:scaleX(1.292)">1000000</i>
<i class="nw" style="left:764.8px;top:567.6px;transform:scaleX(1.255)">&quot;–&quot;</i>
<i class="nw" style="left:793.4px;top:567.6px;transform:scaleX(1.256)">&quot;Apache–HttpClient/4.5.5</i>
<i class="nw" style="left:1017.4px;top:567.6px;transform:scaleX(1.250)">(Java/10.0.1)&quot;</i>
<i class="nw" style="left:25.3px;top:592.6px;transform:scaleX(1.184)">127.0.0.1</i>
<i class="nw" style="left:108.1px;top:592.6px;transform:scaleX(1.090)">–</i>
<i class="nw" style="left:126.7px;top:592.6px;transform:scaleX(1.186)">–</i>
<i class="nw" style="left:143.0px;top:592.6px;transform:scaleX(1.225)">[01/Jul/2018:14:46:15</i>
<i class="nw" style="left:333.3px;top:592.6px;transform:scaleX(1.344)">+0700]</i>
<i class="nw" style="left:403.1px;top:592.6px;transform:scaleX(0.981)">&quot;GET</i>
<i class="nw" style="left:448.0px;top:592.6px;transform:scaleX(1.214)">/onemb.htm</i>
<i class="nw" style="left:551.6px;top:592.6px;transform:scaleX(1.099)">HTTP/1.1&quot;</i>
<i class="nw" style="left:638.3px;top:592.6px;transform:scaleX(1.266)">200</i>
<i class="nw" style="left:679.1px;top:592.6px;transform:scaleX(1.292)">1000000</i>
<i class="nw" style="left:764.8px;top:592.6px;transform:scaleX(1.255)">&quot;–&quot;</i>
<i class="nw" style="left:793.4px;top:592.6px;transform:scaleX(1.256)">&quot;Apache–HttpClient/4.5.5</i>
<i class="nw" style="left:1017.4px;top:592.6px;transform:scaleX(1.250)">(Java/10.0.1)&quot;</i>
<i class="nw" style="left:25.3px;top:617.6px;transform:scaleX(1.184)">127.0.0.1</i>
<i class="nw" style="left:108.1px;top:617.6px;transform:scaleX(1.090)">–</i>
<i class="nw" style="left:126.7px;top:617.6px;transform:scaleX(1.186)">–</i>
<i class="nw" style="left:143.0px;top:617.6px;transform:scaleX(1.225)">[01/Jul/2018:14:46:16</i>
<i class="nw" style="left:333.3px;top:617.6px;transform:scaleX(1.344)">+0700]</i>
<i class="nw" style="left:403.1px;top:617.6px;transform:scaleX(0.981)">&quot;GET</i>
<i class="nw" style="left:448.0px;top:617.6px;transform:scaleX(1.214)">/onemb.htm</i>
<i class="nw" style="left:551.6px;top:617.6px;transform:scaleX(1.099)">HTTP/1.1&quot;</i>
<i class="nw" style="left:638.3px;top:617.6px;transform:scaleX(1.266)">200</i>
<i class="nw" style="left:679.1px;top:617.6px;transform:scaleX(1.292)">1000000</i>
<i class="nw" style="left:764.8px;top:617.6px;transform:scaleX(1.255)">&quot;–&quot;</i>
<i class="nw" style="left:793.4px;top:617.6px;transform:scaleX(1.256)">&quot;Apache–HttpClient/4.5.5</i>
<i class="nw" style="left:1017.4px;top:617.6px;transform:scaleX(1.250)">(Java/10.0.1)&quot;</i>
<i class="nw" style="left:25.3px;top:642.6px;transform:scaleX(1.184)">127.0.0.1</i>
<i class="nw" style="left:108.1px;top:642.6px;transform:scaleX(1.090)">–</i>
<i class="nw" style="left:126.7px;top:642.6px;transform:scaleX(1.186)">–</i>
<i class="nw" style="left:143.0px;top:642.6px;transform:scaleX(1.225)">[01/Jul/2018:14:46:18</i>
<i class="nw" style="left:333.3px;top:642.6px;transform:scaleX(1.344)">+0700]</i>
<i class="nw" style="left:403.1px;top:642.6px;transform:scaleX(0.981)">&quot;GET</i>
<i class="nw" style="left:448.0px;top:642.6px;transform:scaleX(1.214)">/onemb.htm</i>
<i class="nw" style="left:551.6px;top:642.6px;transform:scaleX(1.099)">HTTP/1.1&quot;</i>
<i class="nw" style="left:638.3px;top:642.6px;transform:scaleX(1.266)">200</i>
<i class="nw" style="left:679.1px;top:642.6px;transform:scaleX(1.292)">1000000</i>
<i class="nw" style="left:764.8px;top:642.6px;transform:scaleX(1.255)">&quot;–&quot;</i>
<i class="nw" style="left:793.4px;top:642.6px;transform:scaleX(1.256)">&quot;Apache–HttpClient/4.5.5</i>
<i class="nw" style="left:1017.4px;top:642.6px;transform:scaleX(1.250)">(Java/10.0.1)&quot;</i>
<i class="nw" style="left:25.3px;top:667.6px;transform:scaleX(1.184)">127.0.0.1</i>
<i class="nw" style="left:108.1px;top:667.6px;transform:scaleX(1.090)">–</i>
<i class="nw" style="left:126.7px;top:667.6px;transform:scaleX(1.186)">–</i>
<i class="nw" style="left:143.0px;top:667.6px;transform:scaleX(1.225)">[01/Jul/2018:14:46:18</i>
<i class="nw" style="left:333.3px;top:667.6px;transform:scaleX(1.344)">+0700]</i>
<i class="nw" style="left:403.1px;top:667.6px;transform:scaleX(0.981)">&quot;GET</i>
<i class="nw" style="left:448.0px;top:667.6px;transform:scaleX(1.214)">/onemb.htm</i>
<i class="nw" style="left:551.6px;top:667.6px;transform:scaleX(1.099)">HTTP/1.1&quot;</i>
<i class="nw" style="left:638.3px;top:667.6px;transform:scaleX(1.266)">200</i>
<i class="nw" style="left:679.1px;top:667.6px;transform:scaleX(1.292)">1000000</i>
<i class="nw" style="left:764.8px;top:667.6px;transform:scaleX(1.255)">&quot;–&quot;</i>
<i class="nw" style="left:793.4px;top:667.6px;transform:scaleX(1.256)">&quot;Apache–HttpClient/4.5.5</i>
<i class="nw" style="left:1017.4px;top:667.6px;transform:scaleX(1.250)">(Java/10.0.1)&quot;</i>
<i class="nw" style="left:25.3px;top:692.6px;transform:scaleX(1.184)">127.0.0.1</i>
<i class="nw" style="left:108.1px;top:692.6px;transform:scaleX(1.090)">–</i>
<i class="nw" style="left:126.7px;top:692.6px;transform:scaleX(1.186)">–</i>
<i class="nw" style="left:143.0px;top:692.6px;transform:scaleX(1.225)">[01/Jul/2018:14:46:16</i>
<i class="nw" style="left:333.3px;top:692.6px;transform:scaleX(1.344)">+0700]</i>
<i class="nw" style="left:403.1px;top:692.6px;transform:scaleX(0.981)">&quot;GET</i>
<i class="nw" style="left:448.0px;top:692.6px;transform:scaleX(1.214)">/onemb.htm</i>
<i class="nw" style="left:551.6px;top:692.6px;transform:scaleX(1.099)">HTTP/1.1&quot;</i>
<i class="nw" style="left:638.3px;top:692.6px;transform:scaleX(1.266)">200</i>
<i class="nw" style="left:679.1px;top:692.6px;transform:scaleX(1.292)">1000000</i>
<i class="nw" style="left:764.8px;top:692.6px;transform:scaleX(1.255)">&quot;–&quot;</i>
<i class="nw" style="left:793.4px;top:692.6px;transform:scaleX(1.256)">&quot;Apache–HttpClient/4.5.5</i>
<i class="nw" style="left:1017.4px;top:692.6px;transform:scaleX(1.250)">(Java/10.0.1)&quot;</i>
<i class="nw" style="left:25.3px;top:717.6px;transform:scaleX(1.184)">127.0.0.1</i>
<i class="nw" style="left:108.1px;top:717.6px;transform:scaleX(1.090)">–</i>
<i class="nw" style="left:126.7px;top:717.6px;transform:scaleX(1.186)">–</i>
<i class="nw" style="left:143.0px;top:717.6px;transform:scaleX(1.225)">[01/Jul/2018:14:46:18</i>
<i class="nw" style="left:333.3px;top:717.6px;transform:scaleX(1.344)">+0700]</i>
<i class="nw" style="left:403.1px;top:717.6px;transform:scaleX(0.981)">&quot;GET</i>
<i class="nw" style="left:448.0px;top:717.6px;transform:scaleX(1.214)">/onemb.htm</i>
<i class="nw" style="left:551.6px;top:717.6px;transform:scaleX(1.099)">HTTP/1.1&quot;</i>
<i class="nw" style="left:638.3px;top:717.6px;transform:scaleX(1.266)">200</i>
<i class="nw" style="left:679.1px;top:717.6px;transform:scaleX(1.292)">1000000</i>
<i class="nw" style="left:764.8px;top:717.6px;transform:scaleX(1.255)">&quot;–&quot;</i>
<i class="nw" style="left:793.4px;top:717.6px;transform:scaleX(1.256)">&quot;Apache–HttpClient/4.5.5</i>
<i class="nw" style="left:1017.4px;top:717.6px;transform:scaleX(1.250)">(Java/10.0.1)&quot;</i>
<i class="nw" style="left:25.3px;top:742.6px;transform:scaleX(1.184)">127.0.0.1</i>
<i class="nw" style="left:108.1px;top:742.6px;transform:scaleX(1.090)">–</i>
<i class="nw" style="left:126.7px;top:742.6px;transform:scaleX(1.186)">–</i>
<i class="nw" style="left:143.0px;top:742.6px;transform:scaleX(1.225)">[01/Jul/2018:14:46:18</i>
<i class="nw" style="left:333.3px;top:742.6px;transform:scaleX(1.344)">+0700]</i>
<i class="nw" style="left:403.1px;top:742.6px;transform:scaleX(0.981)">&quot;GET</i>
<i class="nw" style="left:448.0px;top:742.6px;transform:scaleX(1.214)">/onemb.htm</i>
<i class="nw" style="left:551.6px;top:742.6px;transform:scaleX(1.099)">HTTP/1.1&quot;</i>
<i class="nw" style="left:638.3px;top:742.6px;transform:scaleX(1.266)">200</i>
<i class="nw" style="left:679.1px;top:742.6px;transform:scaleX(1.292)">1000000</i>
<i class="nw" style="left:764.8px;top:742.6px;transform:scaleX(1.255)">&quot;–&quot;</i>
<i class="nw" style="left:793.4px;top:742.6px;transform:scaleX(1.256)">&quot;Apache–HttpClient/4.5.5</i>
<i class="nw" style="left:1017.4px;top:742.6px;transform:scaleX(1.250)">(Java/10.0.1)&quot;</i>
<div class="a" style="left:20px;top:790px;width:1058px;height:16px;background:#f0f0f0;"></div>
<div class="a" style="left:37px;top:790px;width:514px;height:16px;background:#cdcdcd;"></div>
<svg class="a" style="left:24px;top:793px" width="10" height="10"><path d="M6.5 1.5 L3 5 L6.5 8.5" stroke="#606060" stroke-width="1.6" fill="none"/></svg>
<div class="a" style="left:19px;top:806px;width:1059px;height:1px;background:#2a83d8;"></div>
</body></html>
